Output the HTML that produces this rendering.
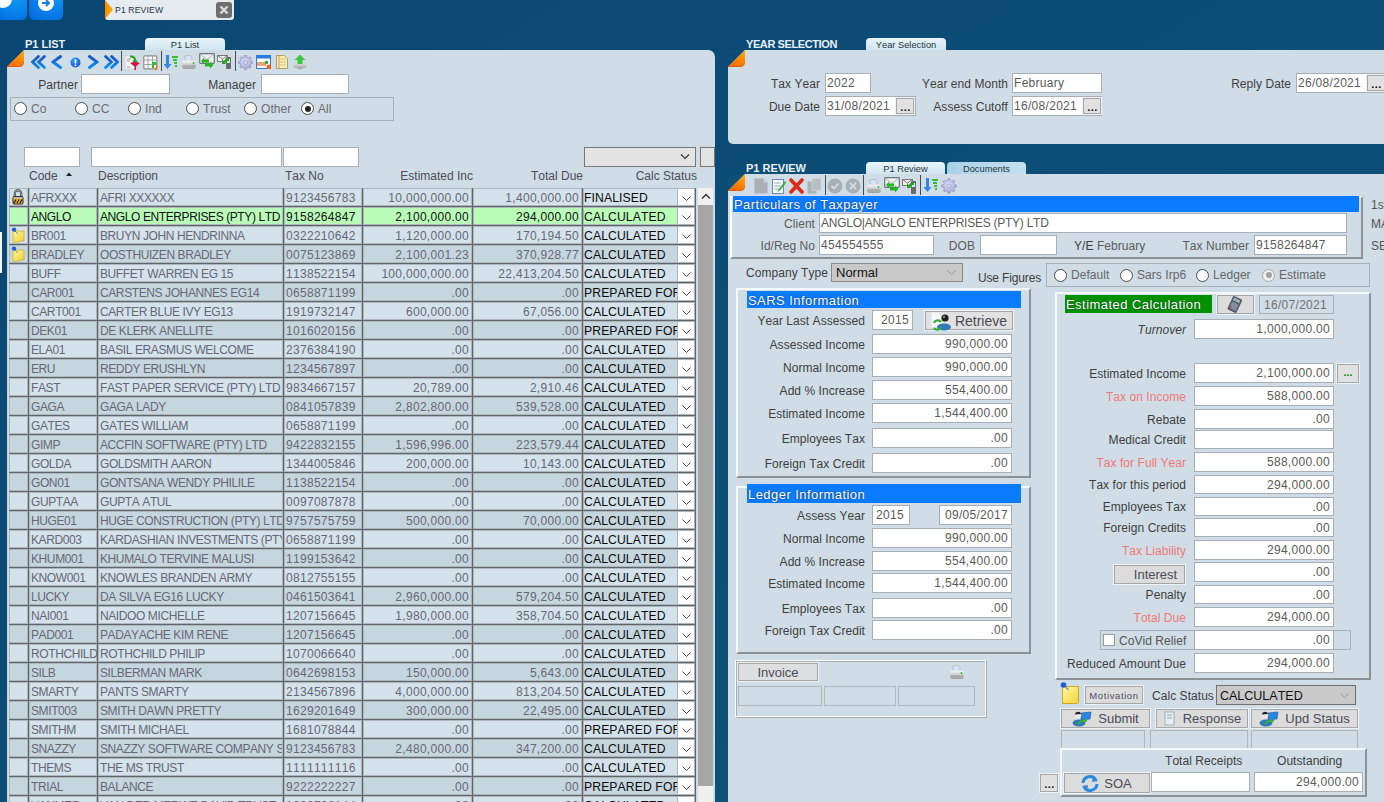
<!DOCTYPE html><html><head><meta charset="utf-8"><style>
html,body{margin:0;padding:0;}
body{width:1384px;height:802px;overflow:hidden;position:relative;background:#0b4874;font-family:"Liberation Sans",sans-serif;font-size:12px;color:#3c3c3c;font-kerning:none;}
.a{position:absolute;box-sizing:border-box;}
.t{white-space:nowrap;}
.lbl{white-space:nowrap;color:#3e3e3e;font-size:12px;letter-spacing:0.05px;}
.inp{background:#fff;border:1px solid #a8aeb3;color:#5a5a5a;white-space:nowrap;overflow:hidden;padding:0 3px 0 1px;font-size:12px;letter-spacing:0.3px;}
.panel{background:#d0dde6;}
.tab{font-size:9.3px;color:#2a3540;text-align:center;border-radius:4px 4px 0 0;}
.ttl{font-size:11px;font-weight:bold;color:#e9eff5;white-space:nowrap;line-height:12px;}
.cell{white-space:nowrap;overflow:hidden;color:#5e5e6e;font-size:12px;line-height:20px;height:18px;letter-spacing:-0.4px;}
.num{letter-spacing:0.3px;}
.btn{background:#e1e1e1;border:1px solid #a6a6a6;color:#4a4a58;text-align:center;white-space:nowrap;box-shadow:0 0 0 1px #eef3f7;}
.grp{border:1px solid #9aa3aa;box-shadow:1px 1px 0 #fff inset;}
.bar{background:#0a7cff;color:#fff;font-size:13px;letter-spacing:0.45px;white-space:nowrap;line-height:18px;padding-left:1px;text-shadow:0 0 1.5px #223;}
</style></head><body>
<div class="a" style="left:0;top:0;width:1384px;height:802px;background:linear-gradient(150deg,#0a4672 0%,#0b4a75 25%,#0d5077 60%,#0f5478 100%)"></div>
<div class="a" style="left:-10px;top:-8px;width:37px;height:28px;border-radius:5px;background:radial-gradient(circle at 70% 0%,#0aa0e8 0%,#0a86ee 45%,#0064da 100%)"></div>
<div class="a" style="left:-6px;top:-10px;width:18px;height:18px;border-radius:50%;background:#fff"></div>
<div class="a" style="left:29px;top:-8px;width:34px;height:28px;border-radius:5px;background:radial-gradient(circle at 70% 0%,#0aa0e8 0%,#0a86ee 45%,#0064da 100%)"></div>
<div class="a" style="left:38px;top:-5px;width:16px;height:16px;border-radius:50%;background:#fff"></div>
<svg class="a" style="left:40px;top:-2px" width="12" height="10" viewBox="0 0 12 10"><path d="M2 5 H9 M6 2 L9 5 L6 8" stroke="#1a7ee0" stroke-width="2" fill="none"/></svg>
<div class="a" style="left:105px;top:-4px;width:129px;height:24px;border-radius:3px;background:#e6ebf0"></div>
<svg class="a" style="left:105px;top:0px" width="9" height="19" viewBox="0 0 9 19"><defs><linearGradient id="tg" x1="0" y1="0" x2="1" y2="0"><stop offset="0" stop-color="#ff8800"/><stop offset="1" stop-color="#ffb000"/></linearGradient></defs><path d="M0 0 L8 9.5 L0 19 Z" fill="url(#tg)"/></svg>
<div class="a t " style="left:115px;top:4px;font-size:8.6px;color:#25354a;line-height:12px;letter-spacing:0.15px">P1 REVIEW</div>
<div class="a" style="left:216px;top:2px;width:16px;height:16px;border-radius:3px;background:#6e6e6e"></div>
<svg class="a" style="left:216px;top:2px" width="16" height="16" viewBox="0 0 16 16"><path d="M4.5 4.5 L11.5 11.5 M11.5 4.5 L4.5 11.5" stroke="#dcdcdc" stroke-width="2.4"/></svg>
<div class="a ttl" style="left:25px;top:38px">P1 LIST</div>
<div class="a tab" style="left:145px;top:38px;width:80px;height:12px;line-height:15px;background:linear-gradient(#eaf5fb,#cfe5f1)">P1 List</div>
<div class="a panel" style="left:7px;top:50px;width:708px;height:760px;border-radius:0 7px 0 0;box-shadow:inset 1px 0 0 #c4d2dc"></div>
<div class="a" style="left:0;top:232px;width:2px;height:41px;background:#f4f6f8"></div>
<div class="a" style="left:7px;top:50px;width:17px;height:17px"><svg width="17" height="17" viewBox="0 0 17 17"><defs><linearGradient id="og" x1="0.3" y1="1" x2="0.9" y2="0"><stop offset="0" stop-color="#ff6600"/><stop offset="0.6" stop-color="#ff8c00"/><stop offset="1" stop-color="#ffaa00"/></linearGradient></defs><path d="M0 0 H17 L0 17z" fill="#0a4873"/><path d="M0 17 L17 0 V12 Q17 17 12 17 Z" fill="url(#og)"/><path d="M0.5 16.5 H12 Q16.5 16.5 16.5 12" stroke="#d85000" stroke-width="0.8" fill="none" opacity="0.6"/></svg></div>
<svg class="a" style="left:31px;top:55px" width="16" height="14" viewBox="0 0 16 14"><defs><linearGradient id="bgr" x1="0" y1="0" x2="0" y2="1"><stop offset="0" stop-color="#1a56c4"/><stop offset="1" stop-color="#0a8cf2"/></linearGradient></defs><path d="M7.4 1.5 L1.6 7 L7.4 12.5 M13.4 1.5 L7.6 7 L13.4 12.5" stroke="url(#bgr)" stroke-width="2.8" fill="none" stroke-linecap="round"/></svg>
<svg class="a" style="left:51px;top:55px" width="12" height="14" viewBox="0 0 12 14"><path d="M9.5 1.5 L2 7 L9.5 12.5" stroke="url(#bgr)" stroke-width="2.9" fill="none" stroke-linecap="round"/></svg>
<svg class="a" style="left:70px;top:57px" width="11" height="11" viewBox="0 0 11 11"><defs><radialGradient id="igr" cx="0.4" cy="0.3" r="0.7"><stop offset="0" stop-color="#3aa0ff"/><stop offset="1" stop-color="#0a5ccc"/></radialGradient></defs><circle cx="5.5" cy="5.5" r="5" fill="url(#igr)"/><rect x="4.6" y="2.2" width="1.8" height="4.2" rx="0.6" fill="#fff"/><rect x="4.6" y="7.4" width="1.8" height="1.8" rx="0.6" fill="#fff"/></svg>
<svg class="a" style="left:87px;top:55px" width="12" height="14" viewBox="0 0 12 14"><path d="M2.5 1.5 L10 7 L2.5 12.5" stroke="url(#bgr)" stroke-width="2.9" fill="none" stroke-linecap="round"/></svg>
<svg class="a" style="left:103px;top:55px" width="16" height="14" viewBox="0 0 16 14"><path d="M2.6 1.5 L8.4 7 L2.6 12.5 M8.6 1.5 L14.4 7 L8.6 12.5" stroke="url(#bgr)" stroke-width="2.8" fill="none" stroke-linecap="round"/></svg>
<div class="a" style="left:121px;top:51px;width:1px;height:20px;background:#464c52"></div>
<svg class="a" style="left:124px;top:54px" width="16" height="16" viewBox="0 0 16 16"><rect x="1" y="2" width="10" height="13" fill="#f7f7f7" stroke="#cfcfcf" stroke-width="0.8"/><path d="M3 5 h4 M3 7 h3 M3 13 h3" stroke="#9a9a9a" stroke-width="1"/><path d="M6 1.5 Q12 1 12 6.5 L14 6.5 L11 10.5 L8 6.5 L10 6.5 Q10 3.5 6 3.5z" fill="#22a622"/><path d="M6 9 Q11 7 16 9 L12 12.5 V16 H10.5 V12.5z" fill="#d41448"/></svg>
<svg class="a" style="left:143px;top:55px" width="16" height="15" viewBox="0 0 16 15"><rect x="0.8" y="0.8" width="13" height="13" rx="1" fill="#fbfbff" stroke="#8c8c8c" stroke-width="1.2"/><path d="M1 5 h13 M1 9.5 h13 M5 1 v13 M9.5 1 v13" stroke="#9c9c9c" stroke-width="0.9"/><path d="M9 7 h3.5 q1 0 1 1.5 q0 1.5 -1 1.5 h-1.5 v3 h-2z" fill="#32b832"/><path d="M11 14.5 q2 -1 3 -5 q1.5 3 -0.5 5.5z" fill="#f26a1e"/></svg>
<div class="a" style="left:161px;top:51px;width:1px;height:20px;background:#464c52"></div>
<svg class="a" style="left:164px;top:55px" width="15" height="14" viewBox="0 0 15 14"><path d="M2 0 h3 v9 h2.5 l-4 5 -4 -5 h2.5z" fill="#2f86e6"/><path d="M8 1 h6 v2 h-6z M9 4 h4 v2 h-4z M10 7 h3 v2 h-3z M11 10 h2 v2 h-2z" fill="#35c030"/></svg>
<svg class="a" style="left:181px;top:55px" width="16" height="14" viewBox="0 0 16 14"><defs><linearGradient id="pg" x1="0" y1="0" x2="0" y2="1"><stop offset="0" stop-color="#fafafa"/><stop offset="1" stop-color="#9a9a9a"/></linearGradient></defs><path d="M3.5 1 L9.5 0.3 L11.5 5.5 L5 6.2z" fill="#d6e6f8" stroke="#9aaabb" stroke-width="0.6"/><path d="M1 8 Q1 5.5 4 5.5 H12 Q15 5.5 15 8.5 V11 Q15 14 12 14 H4 Q1 14 1 11z" fill="url(#pg)"/><path d="M2 11 H14" stroke="#8a8a8a" stroke-width="0.6"/><circle cx="12.5" cy="8" r="0.9" fill="#30b030"/></svg>
<svg class="a" style="left:199px;top:53px" width="16" height="16" viewBox="0 0 16 16"><rect x="0.7" y="0.7" width="14.6" height="9.6" rx="0.8" fill="#f0f0f0" stroke="#6a747c" stroke-width="1.2"/><path d="M1 1 L8 6.5 L15 1" stroke="#9aa" fill="none" stroke-width="0.8"/><path d="M4 6.5 h6 v3 h-6z" fill="#25b525"/><path d="M5 4.5 L2 8 L5 11.5z" fill="#25b525"/><path d="M6 10.5 h6 v3 h-6z" fill="#25b525"/><path d="M11 8.5 L14.5 12 L11 15.5z" fill="#25b525"/></svg>
<svg class="a" style="left:217px;top:54px" width="15" height="15" viewBox="0 0 15 15"><rect x="0.5" y="1.5" width="10" height="6" fill="#f4f4f4" stroke="#777"/><path d="M0.5 1.5 L5.5 5 L10.5 1.5" stroke="#777" fill="none"/><rect x="9" y="3" width="5" height="12" rx="1" fill="#6a6a6a"/><rect x="10" y="5" width="3" height="4" fill="#cfe"/><path d="M12 4 q-4 0 -5 3 l-2-2 v5 h5 l-2-1 q1-2 4-2z" fill="#2aa02a"/></svg>
<div class="a" style="left:235px;top:51px;width:1px;height:20px;background:#464c52"></div>
<svg class="a" style="left:238px;top:55px" width="15" height="15" viewBox="0 0 15 15"><defs><radialGradient id="ggr" cx="0.45" cy="0.4" r="0.6"><stop offset="0" stop-color="#e0e0f6"/><stop offset="1" stop-color="#a4a4d8"/></radialGradient></defs><path d="M12.53 6.17 L14.62 6.42 L14.62 8.58 L12.53 8.83 L12.30 9.49 L12.00 10.11 L13.30 11.77 L11.77 13.30 L10.11 12.00 L9.49 12.30 L8.83 12.53 L8.58 14.62 L6.42 14.62 L6.17 12.53 L5.51 12.30 L4.89 12.00 L3.23 13.30 L1.70 11.77 L3.00 10.11 L2.70 9.49 L2.47 8.83 L0.38 8.58 L0.38 6.42 L2.47 6.17 L2.70 5.51 L3.00 4.89 L1.70 3.23 L3.23 1.70 L4.89 3.00 L5.51 2.70 L6.17 2.47 L6.42 0.38 L8.58 0.38 L8.83 2.47 L9.49 2.70 L10.11 3.00 L11.77 1.70 L13.30 3.23 L12.00 4.89 L12.30 5.51Z" fill="url(#ggr)" stroke="#8a8ac0" stroke-width="0.6"/><circle cx="7.5" cy="7.5" r="2" fill="#d0dde6" stroke="#9090c0" stroke-width="0.6"/></svg>
<svg class="a" style="left:256px;top:55px" width="15" height="14" viewBox="0 0 15 14"><rect x="0.5" y="0.5" width="14" height="13" fill="#fff" stroke="#2a7ae0"/><rect x="0.5" y="0.5" width="14" height="3" fill="#2a7ae0"/><path d="M1 8 h9 M1 10 h9" stroke="#f08040" stroke-width="1.5"/><path d="M9 6 h3 v3 h-3z" fill="#30b040"/><circle cx="13" cy="12" r="2.5" fill="#f06020"/></svg>
<svg class="a" style="left:276px;top:55px" width="12" height="14" viewBox="0 0 12 14"><path d="M0.5 0.5 h8 l3 3 v10 h-11z" fill="#f8eeb0" stroke="#b0a070"/><path d="M3 0.5 v13" stroke="#e07060" stroke-width="0.8"/><path d="M4 4 h6 M4 7 h6 M4 10 h6" stroke="#c8b880" stroke-width="0.8"/></svg>
<svg class="a" style="left:293px;top:54px" width="14" height="16" viewBox="0 0 14 16"><defs><linearGradient id="ugr" x1="0" y1="0" x2="0" y2="1"><stop offset="0" stop-color="#f4f4f4"/><stop offset="1" stop-color="#9a9a9a"/></linearGradient></defs><path d="M0.5 10 L7 7.5 L13.5 10 V13 L7 15.5 L0.5 13z" fill="url(#ugr)"/><path d="M7 0.5 L12.5 6 H9.5 V10 H4.5 V6 H1.5z" fill="#3cc83c"/></svg>
<div class="a lbl" style="right:1306px;top:75px;height:20px;line-height:20px;">Partner</div>
<div class="a inp" style="left:81px;top:74px;width:89px;height:20px;text-align:left;line-height:18px;"></div>
<div class="a lbl" style="right:1128px;top:75px;height:20px;line-height:20px;">Manager</div>
<div class="a inp" style="left:261px;top:74px;width:88px;height:20px;text-align:left;line-height:18px;"></div>
<div class="a" style="left:10px;top:97px;width:384px;height:24px;border:1px solid #a8b0b6;"></div>
<div class="a" style="left:14px;top:102.0px;width:13px;height:13px;border-radius:50%;background:#fff;border:1px solid #4a4a4a;"></div>
<div class="a lbl" style="left:31px;top:100.5px;line-height:16px;color:#6a6a72">Co</div>
<div class="a" style="left:75px;top:102.0px;width:13px;height:13px;border-radius:50%;background:#fff;border:1px solid #4a4a4a;"></div>
<div class="a lbl" style="left:92px;top:100.5px;line-height:16px;color:#6a6a72">CC</div>
<div class="a" style="left:128px;top:102.0px;width:13px;height:13px;border-radius:50%;background:#fff;border:1px solid #4a4a4a;"></div>
<div class="a lbl" style="left:145px;top:100.5px;line-height:16px;color:#6a6a72">Ind</div>
<div class="a" style="left:186px;top:102.0px;width:13px;height:13px;border-radius:50%;background:#fff;border:1px solid #4a4a4a;"></div>
<div class="a lbl" style="left:203px;top:100.5px;line-height:16px;color:#6a6a72">Trust</div>
<div class="a" style="left:244px;top:102.0px;width:13px;height:13px;border-radius:50%;background:#fff;border:1px solid #4a4a4a;"></div>
<div class="a lbl" style="left:261px;top:100.5px;line-height:16px;color:#6a6a72">Other</div>
<div class="a" style="left:301px;top:102.0px;width:13px;height:13px;border-radius:50%;background:#fff;border:1px solid #4a4a4a;"></div>
<div class="a" style="left:304.5px;top:105.5px;width:6px;height:6px;border-radius:50%;background:#222;"></div>
<div class="a lbl" style="left:318px;top:100.5px;line-height:16px;color:#6a6a72">All</div>
<div class="a inp" style="left:24px;top:147px;width:56px;height:20px;text-align:left;line-height:18px;"></div>
<div class="a inp" style="left:91px;top:147px;width:191px;height:20px;text-align:left;line-height:18px;"></div>
<div class="a inp" style="left:283px;top:147px;width:76px;height:20px;text-align:left;line-height:18px;"></div>
<div class="a" style="left:584px;top:147px;width:112px;height:20px;background:#e3e3e3;border:1px solid #767676"></div>
<svg class="a" style="left:680px;top:153px" width="10" height="8" viewBox="0 0 10 8"><path d="M1 1.5 L5 5.5 L9 1.5" stroke="#333" stroke-width="1.2" fill="none"/></svg>
<div class="a" style="left:700px;top:147px;width:15px;height:20px;background:#e3e3e3;border:1px solid #767676"></div>
<div class="a t " style="left:29px;top:168px;color:#4c4c58;font-size:12px;line-height:16px">Code</div>
<svg class="a" style="left:66px;top:172px" width="6" height="5" viewBox="0 0 6 5"><path d="M0 4 L3 0.5 L6 4z" fill="#222"/></svg>
<div class="a t " style="left:98px;top:168px;color:#4c4c58;font-size:12px;line-height:16px">Description</div>
<div class="a t " style="left:285px;top:168px;color:#4c4c58;font-size:12px;line-height:16px">Tax No</div>
<div class="a t " style="right:911px;top:168px;color:#4c4c58;font-size:12px;line-height:16px">Estimated Inc</div>
<div class="a t " style="right:801px;top:168px;color:#4c4c58;font-size:12px;line-height:16px">Total Due</div>
<div class="a t " style="right:687px;top:168px;color:#4c4c58;font-size:12px;line-height:16px">Calc Status</div>
<div class="a" style="left:9px;top:188px;width:687px;height:620px;background:#5d666b"></div>
<div class="a" style="left:9px;top:188px;width:19px;height:18px;background:#d4e2ec;box-shadow:inset 0 0 0 1px #b0b6bd"></div>
<div class="a" style="left:29px;top:188px;width:68px;height:18px;background:#d4e2ec;box-shadow:inset 0 0 0 1px #b0b6bd"></div>
<div class="a" style="left:98px;top:188px;width:185px;height:18px;background:#d4e2ec;box-shadow:inset 0 0 0 1px #b0b6bd"></div>
<div class="a" style="left:284px;top:188px;width:78px;height:18px;background:#d4e2ec;box-shadow:inset 0 0 0 1px #b0b6bd"></div>
<div class="a" style="left:363px;top:188px;width:109px;height:18px;background:#d4e2ec;box-shadow:inset 0 0 0 1px #b0b6bd"></div>
<div class="a" style="left:473px;top:188px;width:109px;height:18px;background:#d4e2ec;box-shadow:inset 0 0 0 1px #b0b6bd"></div>
<div class="a" style="left:583px;top:188px;width:112px;height:18px;background:#d4e2ec;box-shadow:inset 0 0 0 1px #b0b6bd"></div>
<div class="a" style="left:11px;top:189px"><svg width="14" height="16" viewBox="0 0 14 16"><path d="M3.8 8 V4.6 A3.2 3.2 0 0 1 10.2 4.6 V8" stroke="#3a3a3a" stroke-width="2.2" fill="none"/><path d="M3.8 8 V4.6 A3.2 3.2 0 0 1 10.2 4.6 V8" stroke="#c8c8c8" stroke-width="0.8" fill="none"/><rect x="2" y="7.5" width="10" height="7.5" rx="1" fill="#f2b000" stroke="#2a2a2a" stroke-width="1"/><rect x="2.5" y="8" width="9" height="1.6" fill="#b8c4cc"/><path d="M3 14 L5 10.5 M6 14 L8 10.5 M9 14 L11 10.5" stroke="#1a1a1a" stroke-width="1.2"/></svg></div>
<div class="a cell" style="left:31px;top:188px;width:66px;color:#676775">AFRXXX</div>
<div class="a cell" style="left:100px;top:188px;width:182px;color:#676775">AFRI XXXXXX</div>
<div class="a cell num" style="left:286px;top:188px;width:76px;color:#676775">9123456783</div>
<div class="a cell num" style="left:363px;top:188px;width:106px;text-align:right;color:#676775">10,000,000.00</div>
<div class="a cell num" style="left:473px;top:188px;width:106px;text-align:right;color:#676775">1,400,000.00</div>
<div class="a cell" style="left:584px;top:188px;width:93px;color:#0a0a0a;font-size:12.2px;letter-spacing:0.1px">FINALISED</div>
<div class="a" style="left:677px;top:188px;width:18px;height:18px;background:#fff;box-shadow:inset 0 0 0 1px #b0b6bd"></div>
<svg class="a" style="left:682px;top:196px" width="9" height="6" viewBox="0 0 9 6"><path d="M0.5 0.5 L4.5 4.5 L8.5 0.5" stroke="#333" stroke-width="0.9" fill="none"/></svg>
<div class="a" style="left:9px;top:207px;width:19px;height:18px;background:#b9fdb9;box-shadow:inset 0 0 0 1px #b0b6bd"></div>
<div class="a" style="left:29px;top:207px;width:68px;height:18px;background:#b9fdb9;box-shadow:inset 0 0 0 1px #b0b6bd"></div>
<div class="a" style="left:98px;top:207px;width:185px;height:18px;background:#b9fdb9;box-shadow:inset 0 0 0 1px #b0b6bd"></div>
<div class="a" style="left:284px;top:207px;width:78px;height:18px;background:#b9fdb9;box-shadow:inset 0 0 0 1px #b0b6bd"></div>
<div class="a" style="left:363px;top:207px;width:109px;height:18px;background:#b9fdb9;box-shadow:inset 0 0 0 1px #b0b6bd"></div>
<div class="a" style="left:473px;top:207px;width:109px;height:18px;background:#b9fdb9;box-shadow:inset 0 0 0 1px #b0b6bd"></div>
<div class="a" style="left:583px;top:207px;width:112px;height:18px;background:#b9fdb9;box-shadow:inset 0 0 0 1px #b0b6bd"></div>
<div class="a cell" style="left:31px;top:207px;width:66px;color:#101010">ANGLO</div>
<div class="a cell" style="left:100px;top:207px;width:182px;color:#101010">ANGLO ENTERPRISES (PTY) LTD</div>
<div class="a cell num" style="left:286px;top:207px;width:76px;color:#101010">9158264847</div>
<div class="a cell num" style="left:363px;top:207px;width:106px;text-align:right;color:#101010">2,100,000.00</div>
<div class="a cell num" style="left:473px;top:207px;width:106px;text-align:right;color:#101010">294,000.00</div>
<div class="a cell" style="left:584px;top:207px;width:93px;color:#0a0a0a;font-size:12.2px;letter-spacing:0.1px">CALCULATED</div>
<div class="a" style="left:677px;top:207px;width:18px;height:18px;background:#fff;box-shadow:inset 0 0 0 1px #b0b6bd"></div>
<svg class="a" style="left:682px;top:215px" width="9" height="6" viewBox="0 0 9 6"><path d="M0.5 0.5 L4.5 4.5 L8.5 0.5" stroke="#333" stroke-width="0.9" fill="none"/></svg>
<div class="a" style="left:9px;top:226px;width:19px;height:18px;background:#d4e2ec;box-shadow:inset 0 0 0 1px #b0b6bd"></div>
<div class="a" style="left:29px;top:226px;width:68px;height:18px;background:#d4e2ec;box-shadow:inset 0 0 0 1px #b0b6bd"></div>
<div class="a" style="left:98px;top:226px;width:185px;height:18px;background:#d4e2ec;box-shadow:inset 0 0 0 1px #b0b6bd"></div>
<div class="a" style="left:284px;top:226px;width:78px;height:18px;background:#d4e2ec;box-shadow:inset 0 0 0 1px #b0b6bd"></div>
<div class="a" style="left:363px;top:226px;width:109px;height:18px;background:#d4e2ec;box-shadow:inset 0 0 0 1px #b0b6bd"></div>
<div class="a" style="left:473px;top:226px;width:109px;height:18px;background:#d4e2ec;box-shadow:inset 0 0 0 1px #b0b6bd"></div>
<div class="a" style="left:583px;top:226px;width:112px;height:18px;background:#d4e2ec;box-shadow:inset 0 0 0 1px #b0b6bd"></div>
<div class="a" style="left:11px;top:227px"><svg width="15" height="17" viewBox="0 0 15 17"><defs><linearGradient id="ng" x1="0" y1="0" x2="1" y2="1"><stop offset="0" stop-color="#fff6a0"/><stop offset="1" stop-color="#f0d030"/></linearGradient></defs><path d="M2 4 h11 v10 q-3 -1 -6 1 q-3 1 -5 0z" fill="url(#ng)" stroke="#c8a820" stroke-width="0.7"/><path d="M3 3 L7 7" stroke="#7a8aa0" stroke-width="1"/><circle cx="3" cy="2.6" r="2.2" fill="#1f5fd8"/></svg></div>
<div class="a cell" style="left:31px;top:226px;width:66px;color:#676775">BR001</div>
<div class="a cell" style="left:100px;top:226px;width:182px;color:#676775">BRUYN JOHN HENDRINNA</div>
<div class="a cell num" style="left:286px;top:226px;width:76px;color:#676775">0322210642</div>
<div class="a cell num" style="left:363px;top:226px;width:106px;text-align:right;color:#676775">1,120,000.00</div>
<div class="a cell num" style="left:473px;top:226px;width:106px;text-align:right;color:#676775">170,194.50</div>
<div class="a cell" style="left:584px;top:226px;width:93px;color:#0a0a0a;font-size:12.2px;letter-spacing:0.1px">CALCULATED</div>
<div class="a" style="left:677px;top:226px;width:18px;height:18px;background:#fff;box-shadow:inset 0 0 0 1px #b0b6bd"></div>
<svg class="a" style="left:682px;top:234px" width="9" height="6" viewBox="0 0 9 6"><path d="M0.5 0.5 L4.5 4.5 L8.5 0.5" stroke="#333" stroke-width="0.9" fill="none"/></svg>
<div class="a" style="left:9px;top:245px;width:19px;height:18px;background:#c6d6df;box-shadow:inset 0 0 0 1px #b0b6bd"></div>
<div class="a" style="left:29px;top:245px;width:68px;height:18px;background:#c6d6df;box-shadow:inset 0 0 0 1px #b0b6bd"></div>
<div class="a" style="left:98px;top:245px;width:185px;height:18px;background:#c6d6df;box-shadow:inset 0 0 0 1px #b0b6bd"></div>
<div class="a" style="left:284px;top:245px;width:78px;height:18px;background:#c6d6df;box-shadow:inset 0 0 0 1px #b0b6bd"></div>
<div class="a" style="left:363px;top:245px;width:109px;height:18px;background:#c6d6df;box-shadow:inset 0 0 0 1px #b0b6bd"></div>
<div class="a" style="left:473px;top:245px;width:109px;height:18px;background:#c6d6df;box-shadow:inset 0 0 0 1px #b0b6bd"></div>
<div class="a" style="left:583px;top:245px;width:112px;height:18px;background:#c6d6df;box-shadow:inset 0 0 0 1px #b0b6bd"></div>
<div class="a" style="left:11px;top:246px"><svg width="15" height="17" viewBox="0 0 15 17"><defs><linearGradient id="ng" x1="0" y1="0" x2="1" y2="1"><stop offset="0" stop-color="#fff6a0"/><stop offset="1" stop-color="#f0d030"/></linearGradient></defs><path d="M2 4 h11 v10 q-3 -1 -6 1 q-3 1 -5 0z" fill="url(#ng)" stroke="#c8a820" stroke-width="0.7"/><path d="M3 3 L7 7" stroke="#7a8aa0" stroke-width="1"/><circle cx="3" cy="2.6" r="2.2" fill="#1f5fd8"/></svg></div>
<div class="a cell" style="left:31px;top:245px;width:66px;color:#676775">BRADLEY</div>
<div class="a cell" style="left:100px;top:245px;width:182px;color:#676775">OOSTHUIZEN BRADLEY</div>
<div class="a cell num" style="left:286px;top:245px;width:76px;color:#676775">0075123869</div>
<div class="a cell num" style="left:363px;top:245px;width:106px;text-align:right;color:#676775">2,100,001.23</div>
<div class="a cell num" style="left:473px;top:245px;width:106px;text-align:right;color:#676775">370,928.77</div>
<div class="a cell" style="left:584px;top:245px;width:93px;color:#0a0a0a;font-size:12.2px;letter-spacing:0.1px">CALCULATED</div>
<div class="a" style="left:677px;top:245px;width:18px;height:18px;background:#fff;box-shadow:inset 0 0 0 1px #b0b6bd"></div>
<svg class="a" style="left:682px;top:253px" width="9" height="6" viewBox="0 0 9 6"><path d="M0.5 0.5 L4.5 4.5 L8.5 0.5" stroke="#333" stroke-width="0.9" fill="none"/></svg>
<div class="a" style="left:9px;top:264px;width:19px;height:18px;background:#d4e2ec;box-shadow:inset 0 0 0 1px #b0b6bd"></div>
<div class="a" style="left:29px;top:264px;width:68px;height:18px;background:#d4e2ec;box-shadow:inset 0 0 0 1px #b0b6bd"></div>
<div class="a" style="left:98px;top:264px;width:185px;height:18px;background:#d4e2ec;box-shadow:inset 0 0 0 1px #b0b6bd"></div>
<div class="a" style="left:284px;top:264px;width:78px;height:18px;background:#d4e2ec;box-shadow:inset 0 0 0 1px #b0b6bd"></div>
<div class="a" style="left:363px;top:264px;width:109px;height:18px;background:#d4e2ec;box-shadow:inset 0 0 0 1px #b0b6bd"></div>
<div class="a" style="left:473px;top:264px;width:109px;height:18px;background:#d4e2ec;box-shadow:inset 0 0 0 1px #b0b6bd"></div>
<div class="a" style="left:583px;top:264px;width:112px;height:18px;background:#d4e2ec;box-shadow:inset 0 0 0 1px #b0b6bd"></div>
<div class="a cell" style="left:31px;top:264px;width:66px;color:#676775">BUFF</div>
<div class="a cell" style="left:100px;top:264px;width:182px;color:#676775">BUFFET WARREN EG 15</div>
<div class="a cell num" style="left:286px;top:264px;width:76px;color:#676775">1138522154</div>
<div class="a cell num" style="left:363px;top:264px;width:106px;text-align:right;color:#676775">100,000,000.00</div>
<div class="a cell num" style="left:473px;top:264px;width:106px;text-align:right;color:#676775">22,413,204.50</div>
<div class="a cell" style="left:584px;top:264px;width:93px;color:#0a0a0a;font-size:12.2px;letter-spacing:0.1px">CALCULATED</div>
<div class="a" style="left:677px;top:264px;width:18px;height:18px;background:#fff;box-shadow:inset 0 0 0 1px #b0b6bd"></div>
<svg class="a" style="left:682px;top:272px" width="9" height="6" viewBox="0 0 9 6"><path d="M0.5 0.5 L4.5 4.5 L8.5 0.5" stroke="#333" stroke-width="0.9" fill="none"/></svg>
<div class="a" style="left:9px;top:283px;width:19px;height:18px;background:#c6d6df;box-shadow:inset 0 0 0 1px #b0b6bd"></div>
<div class="a" style="left:29px;top:283px;width:68px;height:18px;background:#c6d6df;box-shadow:inset 0 0 0 1px #b0b6bd"></div>
<div class="a" style="left:98px;top:283px;width:185px;height:18px;background:#c6d6df;box-shadow:inset 0 0 0 1px #b0b6bd"></div>
<div class="a" style="left:284px;top:283px;width:78px;height:18px;background:#c6d6df;box-shadow:inset 0 0 0 1px #b0b6bd"></div>
<div class="a" style="left:363px;top:283px;width:109px;height:18px;background:#c6d6df;box-shadow:inset 0 0 0 1px #b0b6bd"></div>
<div class="a" style="left:473px;top:283px;width:109px;height:18px;background:#c6d6df;box-shadow:inset 0 0 0 1px #b0b6bd"></div>
<div class="a" style="left:583px;top:283px;width:112px;height:18px;background:#c6d6df;box-shadow:inset 0 0 0 1px #b0b6bd"></div>
<div class="a cell" style="left:31px;top:283px;width:66px;color:#676775">CAR001</div>
<div class="a cell" style="left:100px;top:283px;width:182px;color:#676775">CARSTENS JOHANNES EG14</div>
<div class="a cell num" style="left:286px;top:283px;width:76px;color:#676775">0658871199</div>
<div class="a cell num" style="left:363px;top:283px;width:106px;text-align:right;color:#676775">.00</div>
<div class="a cell num" style="left:473px;top:283px;width:106px;text-align:right;color:#676775">.00</div>
<div class="a cell" style="left:584px;top:283px;width:93px;color:#0a0a0a;font-size:12.2px;letter-spacing:0.1px">PREPARED FOR</div>
<div class="a" style="left:677px;top:283px;width:18px;height:18px;background:#fff;box-shadow:inset 0 0 0 1px #b0b6bd"></div>
<svg class="a" style="left:682px;top:291px" width="9" height="6" viewBox="0 0 9 6"><path d="M0.5 0.5 L4.5 4.5 L8.5 0.5" stroke="#333" stroke-width="0.9" fill="none"/></svg>
<div class="a" style="left:9px;top:302px;width:19px;height:18px;background:#d4e2ec;box-shadow:inset 0 0 0 1px #b0b6bd"></div>
<div class="a" style="left:29px;top:302px;width:68px;height:18px;background:#d4e2ec;box-shadow:inset 0 0 0 1px #b0b6bd"></div>
<div class="a" style="left:98px;top:302px;width:185px;height:18px;background:#d4e2ec;box-shadow:inset 0 0 0 1px #b0b6bd"></div>
<div class="a" style="left:284px;top:302px;width:78px;height:18px;background:#d4e2ec;box-shadow:inset 0 0 0 1px #b0b6bd"></div>
<div class="a" style="left:363px;top:302px;width:109px;height:18px;background:#d4e2ec;box-shadow:inset 0 0 0 1px #b0b6bd"></div>
<div class="a" style="left:473px;top:302px;width:109px;height:18px;background:#d4e2ec;box-shadow:inset 0 0 0 1px #b0b6bd"></div>
<div class="a" style="left:583px;top:302px;width:112px;height:18px;background:#d4e2ec;box-shadow:inset 0 0 0 1px #b0b6bd"></div>
<div class="a cell" style="left:31px;top:302px;width:66px;color:#676775">CART001</div>
<div class="a cell" style="left:100px;top:302px;width:182px;color:#676775">CARTER BLUE IVY EG13</div>
<div class="a cell num" style="left:286px;top:302px;width:76px;color:#676775">1919732147</div>
<div class="a cell num" style="left:363px;top:302px;width:106px;text-align:right;color:#676775">600,000.00</div>
<div class="a cell num" style="left:473px;top:302px;width:106px;text-align:right;color:#676775">67,056.00</div>
<div class="a cell" style="left:584px;top:302px;width:93px;color:#0a0a0a;font-size:12.2px;letter-spacing:0.1px">CALCULATED</div>
<div class="a" style="left:677px;top:302px;width:18px;height:18px;background:#fff;box-shadow:inset 0 0 0 1px #b0b6bd"></div>
<svg class="a" style="left:682px;top:310px" width="9" height="6" viewBox="0 0 9 6"><path d="M0.5 0.5 L4.5 4.5 L8.5 0.5" stroke="#333" stroke-width="0.9" fill="none"/></svg>
<div class="a" style="left:9px;top:321px;width:19px;height:18px;background:#c6d6df;box-shadow:inset 0 0 0 1px #b0b6bd"></div>
<div class="a" style="left:29px;top:321px;width:68px;height:18px;background:#c6d6df;box-shadow:inset 0 0 0 1px #b0b6bd"></div>
<div class="a" style="left:98px;top:321px;width:185px;height:18px;background:#c6d6df;box-shadow:inset 0 0 0 1px #b0b6bd"></div>
<div class="a" style="left:284px;top:321px;width:78px;height:18px;background:#c6d6df;box-shadow:inset 0 0 0 1px #b0b6bd"></div>
<div class="a" style="left:363px;top:321px;width:109px;height:18px;background:#c6d6df;box-shadow:inset 0 0 0 1px #b0b6bd"></div>
<div class="a" style="left:473px;top:321px;width:109px;height:18px;background:#c6d6df;box-shadow:inset 0 0 0 1px #b0b6bd"></div>
<div class="a" style="left:583px;top:321px;width:112px;height:18px;background:#c6d6df;box-shadow:inset 0 0 0 1px #b0b6bd"></div>
<div class="a cell" style="left:31px;top:321px;width:66px;color:#676775">DEK01</div>
<div class="a cell" style="left:100px;top:321px;width:182px;color:#676775">DE KLERK ANELLITE</div>
<div class="a cell num" style="left:286px;top:321px;width:76px;color:#676775">1016020156</div>
<div class="a cell num" style="left:363px;top:321px;width:106px;text-align:right;color:#676775">.00</div>
<div class="a cell num" style="left:473px;top:321px;width:106px;text-align:right;color:#676775">.00</div>
<div class="a cell" style="left:584px;top:321px;width:93px;color:#0a0a0a;font-size:12.2px;letter-spacing:0.1px">PREPARED FOR</div>
<div class="a" style="left:677px;top:321px;width:18px;height:18px;background:#fff;box-shadow:inset 0 0 0 1px #b0b6bd"></div>
<svg class="a" style="left:682px;top:329px" width="9" height="6" viewBox="0 0 9 6"><path d="M0.5 0.5 L4.5 4.5 L8.5 0.5" stroke="#333" stroke-width="0.9" fill="none"/></svg>
<div class="a" style="left:9px;top:340px;width:19px;height:18px;background:#d4e2ec;box-shadow:inset 0 0 0 1px #b0b6bd"></div>
<div class="a" style="left:29px;top:340px;width:68px;height:18px;background:#d4e2ec;box-shadow:inset 0 0 0 1px #b0b6bd"></div>
<div class="a" style="left:98px;top:340px;width:185px;height:18px;background:#d4e2ec;box-shadow:inset 0 0 0 1px #b0b6bd"></div>
<div class="a" style="left:284px;top:340px;width:78px;height:18px;background:#d4e2ec;box-shadow:inset 0 0 0 1px #b0b6bd"></div>
<div class="a" style="left:363px;top:340px;width:109px;height:18px;background:#d4e2ec;box-shadow:inset 0 0 0 1px #b0b6bd"></div>
<div class="a" style="left:473px;top:340px;width:109px;height:18px;background:#d4e2ec;box-shadow:inset 0 0 0 1px #b0b6bd"></div>
<div class="a" style="left:583px;top:340px;width:112px;height:18px;background:#d4e2ec;box-shadow:inset 0 0 0 1px #b0b6bd"></div>
<div class="a cell" style="left:31px;top:340px;width:66px;color:#676775">ELA01</div>
<div class="a cell" style="left:100px;top:340px;width:182px;color:#676775">BASIL ERASMUS WELCOME</div>
<div class="a cell num" style="left:286px;top:340px;width:76px;color:#676775">2376384190</div>
<div class="a cell num" style="left:363px;top:340px;width:106px;text-align:right;color:#676775">.00</div>
<div class="a cell num" style="left:473px;top:340px;width:106px;text-align:right;color:#676775">.00</div>
<div class="a cell" style="left:584px;top:340px;width:93px;color:#0a0a0a;font-size:12.2px;letter-spacing:0.1px">CALCULATED</div>
<div class="a" style="left:677px;top:340px;width:18px;height:18px;background:#fff;box-shadow:inset 0 0 0 1px #b0b6bd"></div>
<svg class="a" style="left:682px;top:348px" width="9" height="6" viewBox="0 0 9 6"><path d="M0.5 0.5 L4.5 4.5 L8.5 0.5" stroke="#333" stroke-width="0.9" fill="none"/></svg>
<div class="a" style="left:9px;top:359px;width:19px;height:18px;background:#c6d6df;box-shadow:inset 0 0 0 1px #b0b6bd"></div>
<div class="a" style="left:29px;top:359px;width:68px;height:18px;background:#c6d6df;box-shadow:inset 0 0 0 1px #b0b6bd"></div>
<div class="a" style="left:98px;top:359px;width:185px;height:18px;background:#c6d6df;box-shadow:inset 0 0 0 1px #b0b6bd"></div>
<div class="a" style="left:284px;top:359px;width:78px;height:18px;background:#c6d6df;box-shadow:inset 0 0 0 1px #b0b6bd"></div>
<div class="a" style="left:363px;top:359px;width:109px;height:18px;background:#c6d6df;box-shadow:inset 0 0 0 1px #b0b6bd"></div>
<div class="a" style="left:473px;top:359px;width:109px;height:18px;background:#c6d6df;box-shadow:inset 0 0 0 1px #b0b6bd"></div>
<div class="a" style="left:583px;top:359px;width:112px;height:18px;background:#c6d6df;box-shadow:inset 0 0 0 1px #b0b6bd"></div>
<div class="a cell" style="left:31px;top:359px;width:66px;color:#676775">ERU</div>
<div class="a cell" style="left:100px;top:359px;width:182px;color:#676775">REDDY ERUSHLYN</div>
<div class="a cell num" style="left:286px;top:359px;width:76px;color:#676775">1234567897</div>
<div class="a cell num" style="left:363px;top:359px;width:106px;text-align:right;color:#676775">.00</div>
<div class="a cell num" style="left:473px;top:359px;width:106px;text-align:right;color:#676775">.00</div>
<div class="a cell" style="left:584px;top:359px;width:93px;color:#0a0a0a;font-size:12.2px;letter-spacing:0.1px">CALCULATED</div>
<div class="a" style="left:677px;top:359px;width:18px;height:18px;background:#fff;box-shadow:inset 0 0 0 1px #b0b6bd"></div>
<svg class="a" style="left:682px;top:367px" width="9" height="6" viewBox="0 0 9 6"><path d="M0.5 0.5 L4.5 4.5 L8.5 0.5" stroke="#333" stroke-width="0.9" fill="none"/></svg>
<div class="a" style="left:9px;top:378px;width:19px;height:18px;background:#d4e2ec;box-shadow:inset 0 0 0 1px #b0b6bd"></div>
<div class="a" style="left:29px;top:378px;width:68px;height:18px;background:#d4e2ec;box-shadow:inset 0 0 0 1px #b0b6bd"></div>
<div class="a" style="left:98px;top:378px;width:185px;height:18px;background:#d4e2ec;box-shadow:inset 0 0 0 1px #b0b6bd"></div>
<div class="a" style="left:284px;top:378px;width:78px;height:18px;background:#d4e2ec;box-shadow:inset 0 0 0 1px #b0b6bd"></div>
<div class="a" style="left:363px;top:378px;width:109px;height:18px;background:#d4e2ec;box-shadow:inset 0 0 0 1px #b0b6bd"></div>
<div class="a" style="left:473px;top:378px;width:109px;height:18px;background:#d4e2ec;box-shadow:inset 0 0 0 1px #b0b6bd"></div>
<div class="a" style="left:583px;top:378px;width:112px;height:18px;background:#d4e2ec;box-shadow:inset 0 0 0 1px #b0b6bd"></div>
<div class="a cell" style="left:31px;top:378px;width:66px;color:#676775">FAST</div>
<div class="a cell" style="left:100px;top:378px;width:182px;color:#676775">FAST PAPER SERVICE (PTY) LTD</div>
<div class="a cell num" style="left:286px;top:378px;width:76px;color:#676775">9834667157</div>
<div class="a cell num" style="left:363px;top:378px;width:106px;text-align:right;color:#676775">20,789.00</div>
<div class="a cell num" style="left:473px;top:378px;width:106px;text-align:right;color:#676775">2,910.46</div>
<div class="a cell" style="left:584px;top:378px;width:93px;color:#0a0a0a;font-size:12.2px;letter-spacing:0.1px">CALCULATED</div>
<div class="a" style="left:677px;top:378px;width:18px;height:18px;background:#fff;box-shadow:inset 0 0 0 1px #b0b6bd"></div>
<svg class="a" style="left:682px;top:386px" width="9" height="6" viewBox="0 0 9 6"><path d="M0.5 0.5 L4.5 4.5 L8.5 0.5" stroke="#333" stroke-width="0.9" fill="none"/></svg>
<div class="a" style="left:9px;top:397px;width:19px;height:18px;background:#c6d6df;box-shadow:inset 0 0 0 1px #b0b6bd"></div>
<div class="a" style="left:29px;top:397px;width:68px;height:18px;background:#c6d6df;box-shadow:inset 0 0 0 1px #b0b6bd"></div>
<div class="a" style="left:98px;top:397px;width:185px;height:18px;background:#c6d6df;box-shadow:inset 0 0 0 1px #b0b6bd"></div>
<div class="a" style="left:284px;top:397px;width:78px;height:18px;background:#c6d6df;box-shadow:inset 0 0 0 1px #b0b6bd"></div>
<div class="a" style="left:363px;top:397px;width:109px;height:18px;background:#c6d6df;box-shadow:inset 0 0 0 1px #b0b6bd"></div>
<div class="a" style="left:473px;top:397px;width:109px;height:18px;background:#c6d6df;box-shadow:inset 0 0 0 1px #b0b6bd"></div>
<div class="a" style="left:583px;top:397px;width:112px;height:18px;background:#c6d6df;box-shadow:inset 0 0 0 1px #b0b6bd"></div>
<div class="a cell" style="left:31px;top:397px;width:66px;color:#676775">GAGA</div>
<div class="a cell" style="left:100px;top:397px;width:182px;color:#676775">GAGA LADY</div>
<div class="a cell num" style="left:286px;top:397px;width:76px;color:#676775">0841057839</div>
<div class="a cell num" style="left:363px;top:397px;width:106px;text-align:right;color:#676775">2,802,800.00</div>
<div class="a cell num" style="left:473px;top:397px;width:106px;text-align:right;color:#676775">539,528.00</div>
<div class="a cell" style="left:584px;top:397px;width:93px;color:#0a0a0a;font-size:12.2px;letter-spacing:0.1px">CALCULATED</div>
<div class="a" style="left:677px;top:397px;width:18px;height:18px;background:#fff;box-shadow:inset 0 0 0 1px #b0b6bd"></div>
<svg class="a" style="left:682px;top:405px" width="9" height="6" viewBox="0 0 9 6"><path d="M0.5 0.5 L4.5 4.5 L8.5 0.5" stroke="#333" stroke-width="0.9" fill="none"/></svg>
<div class="a" style="left:9px;top:416px;width:19px;height:18px;background:#d4e2ec;box-shadow:inset 0 0 0 1px #b0b6bd"></div>
<div class="a" style="left:29px;top:416px;width:68px;height:18px;background:#d4e2ec;box-shadow:inset 0 0 0 1px #b0b6bd"></div>
<div class="a" style="left:98px;top:416px;width:185px;height:18px;background:#d4e2ec;box-shadow:inset 0 0 0 1px #b0b6bd"></div>
<div class="a" style="left:284px;top:416px;width:78px;height:18px;background:#d4e2ec;box-shadow:inset 0 0 0 1px #b0b6bd"></div>
<div class="a" style="left:363px;top:416px;width:109px;height:18px;background:#d4e2ec;box-shadow:inset 0 0 0 1px #b0b6bd"></div>
<div class="a" style="left:473px;top:416px;width:109px;height:18px;background:#d4e2ec;box-shadow:inset 0 0 0 1px #b0b6bd"></div>
<div class="a" style="left:583px;top:416px;width:112px;height:18px;background:#d4e2ec;box-shadow:inset 0 0 0 1px #b0b6bd"></div>
<div class="a cell" style="left:31px;top:416px;width:66px;color:#676775">GATES</div>
<div class="a cell" style="left:100px;top:416px;width:182px;color:#676775">GATES WILLIAM</div>
<div class="a cell num" style="left:286px;top:416px;width:76px;color:#676775">0658871199</div>
<div class="a cell num" style="left:363px;top:416px;width:106px;text-align:right;color:#676775">.00</div>
<div class="a cell num" style="left:473px;top:416px;width:106px;text-align:right;color:#676775">.00</div>
<div class="a cell" style="left:584px;top:416px;width:93px;color:#0a0a0a;font-size:12.2px;letter-spacing:0.1px">CALCULATED</div>
<div class="a" style="left:677px;top:416px;width:18px;height:18px;background:#fff;box-shadow:inset 0 0 0 1px #b0b6bd"></div>
<svg class="a" style="left:682px;top:424px" width="9" height="6" viewBox="0 0 9 6"><path d="M0.5 0.5 L4.5 4.5 L8.5 0.5" stroke="#333" stroke-width="0.9" fill="none"/></svg>
<div class="a" style="left:9px;top:435px;width:19px;height:18px;background:#c6d6df;box-shadow:inset 0 0 0 1px #b0b6bd"></div>
<div class="a" style="left:29px;top:435px;width:68px;height:18px;background:#c6d6df;box-shadow:inset 0 0 0 1px #b0b6bd"></div>
<div class="a" style="left:98px;top:435px;width:185px;height:18px;background:#c6d6df;box-shadow:inset 0 0 0 1px #b0b6bd"></div>
<div class="a" style="left:284px;top:435px;width:78px;height:18px;background:#c6d6df;box-shadow:inset 0 0 0 1px #b0b6bd"></div>
<div class="a" style="left:363px;top:435px;width:109px;height:18px;background:#c6d6df;box-shadow:inset 0 0 0 1px #b0b6bd"></div>
<div class="a" style="left:473px;top:435px;width:109px;height:18px;background:#c6d6df;box-shadow:inset 0 0 0 1px #b0b6bd"></div>
<div class="a" style="left:583px;top:435px;width:112px;height:18px;background:#c6d6df;box-shadow:inset 0 0 0 1px #b0b6bd"></div>
<div class="a cell" style="left:31px;top:435px;width:66px;color:#676775">GIMP</div>
<div class="a cell" style="left:100px;top:435px;width:182px;color:#676775">ACCFIN SOFTWARE (PTY) LTD</div>
<div class="a cell num" style="left:286px;top:435px;width:76px;color:#676775">9422832155</div>
<div class="a cell num" style="left:363px;top:435px;width:106px;text-align:right;color:#676775">1,596,996.00</div>
<div class="a cell num" style="left:473px;top:435px;width:106px;text-align:right;color:#676775">223,579.44</div>
<div class="a cell" style="left:584px;top:435px;width:93px;color:#0a0a0a;font-size:12.2px;letter-spacing:0.1px">CALCULATED</div>
<div class="a" style="left:677px;top:435px;width:18px;height:18px;background:#fff;box-shadow:inset 0 0 0 1px #b0b6bd"></div>
<svg class="a" style="left:682px;top:443px" width="9" height="6" viewBox="0 0 9 6"><path d="M0.5 0.5 L4.5 4.5 L8.5 0.5" stroke="#333" stroke-width="0.9" fill="none"/></svg>
<div class="a" style="left:9px;top:454px;width:19px;height:18px;background:#d4e2ec;box-shadow:inset 0 0 0 1px #b0b6bd"></div>
<div class="a" style="left:29px;top:454px;width:68px;height:18px;background:#d4e2ec;box-shadow:inset 0 0 0 1px #b0b6bd"></div>
<div class="a" style="left:98px;top:454px;width:185px;height:18px;background:#d4e2ec;box-shadow:inset 0 0 0 1px #b0b6bd"></div>
<div class="a" style="left:284px;top:454px;width:78px;height:18px;background:#d4e2ec;box-shadow:inset 0 0 0 1px #b0b6bd"></div>
<div class="a" style="left:363px;top:454px;width:109px;height:18px;background:#d4e2ec;box-shadow:inset 0 0 0 1px #b0b6bd"></div>
<div class="a" style="left:473px;top:454px;width:109px;height:18px;background:#d4e2ec;box-shadow:inset 0 0 0 1px #b0b6bd"></div>
<div class="a" style="left:583px;top:454px;width:112px;height:18px;background:#d4e2ec;box-shadow:inset 0 0 0 1px #b0b6bd"></div>
<div class="a cell" style="left:31px;top:454px;width:66px;color:#676775">GOLDA</div>
<div class="a cell" style="left:100px;top:454px;width:182px;color:#676775">GOLDSMITH AARON</div>
<div class="a cell num" style="left:286px;top:454px;width:76px;color:#676775">1344005846</div>
<div class="a cell num" style="left:363px;top:454px;width:106px;text-align:right;color:#676775">200,000.00</div>
<div class="a cell num" style="left:473px;top:454px;width:106px;text-align:right;color:#676775">10,143.00</div>
<div class="a cell" style="left:584px;top:454px;width:93px;color:#0a0a0a;font-size:12.2px;letter-spacing:0.1px">CALCULATED</div>
<div class="a" style="left:677px;top:454px;width:18px;height:18px;background:#fff;box-shadow:inset 0 0 0 1px #b0b6bd"></div>
<svg class="a" style="left:682px;top:462px" width="9" height="6" viewBox="0 0 9 6"><path d="M0.5 0.5 L4.5 4.5 L8.5 0.5" stroke="#333" stroke-width="0.9" fill="none"/></svg>
<div class="a" style="left:9px;top:473px;width:19px;height:18px;background:#c6d6df;box-shadow:inset 0 0 0 1px #b0b6bd"></div>
<div class="a" style="left:29px;top:473px;width:68px;height:18px;background:#c6d6df;box-shadow:inset 0 0 0 1px #b0b6bd"></div>
<div class="a" style="left:98px;top:473px;width:185px;height:18px;background:#c6d6df;box-shadow:inset 0 0 0 1px #b0b6bd"></div>
<div class="a" style="left:284px;top:473px;width:78px;height:18px;background:#c6d6df;box-shadow:inset 0 0 0 1px #b0b6bd"></div>
<div class="a" style="left:363px;top:473px;width:109px;height:18px;background:#c6d6df;box-shadow:inset 0 0 0 1px #b0b6bd"></div>
<div class="a" style="left:473px;top:473px;width:109px;height:18px;background:#c6d6df;box-shadow:inset 0 0 0 1px #b0b6bd"></div>
<div class="a" style="left:583px;top:473px;width:112px;height:18px;background:#c6d6df;box-shadow:inset 0 0 0 1px #b0b6bd"></div>
<div class="a cell" style="left:31px;top:473px;width:66px;color:#676775">GON01</div>
<div class="a cell" style="left:100px;top:473px;width:182px;color:#676775">GONTSANA WENDY PHILILE</div>
<div class="a cell num" style="left:286px;top:473px;width:76px;color:#676775">1138522154</div>
<div class="a cell num" style="left:363px;top:473px;width:106px;text-align:right;color:#676775">.00</div>
<div class="a cell num" style="left:473px;top:473px;width:106px;text-align:right;color:#676775">.00</div>
<div class="a cell" style="left:584px;top:473px;width:93px;color:#0a0a0a;font-size:12.2px;letter-spacing:0.1px">CALCULATED</div>
<div class="a" style="left:677px;top:473px;width:18px;height:18px;background:#fff;box-shadow:inset 0 0 0 1px #b0b6bd"></div>
<svg class="a" style="left:682px;top:481px" width="9" height="6" viewBox="0 0 9 6"><path d="M0.5 0.5 L4.5 4.5 L8.5 0.5" stroke="#333" stroke-width="0.9" fill="none"/></svg>
<div class="a" style="left:9px;top:492px;width:19px;height:18px;background:#d4e2ec;box-shadow:inset 0 0 0 1px #b0b6bd"></div>
<div class="a" style="left:29px;top:492px;width:68px;height:18px;background:#d4e2ec;box-shadow:inset 0 0 0 1px #b0b6bd"></div>
<div class="a" style="left:98px;top:492px;width:185px;height:18px;background:#d4e2ec;box-shadow:inset 0 0 0 1px #b0b6bd"></div>
<div class="a" style="left:284px;top:492px;width:78px;height:18px;background:#d4e2ec;box-shadow:inset 0 0 0 1px #b0b6bd"></div>
<div class="a" style="left:363px;top:492px;width:109px;height:18px;background:#d4e2ec;box-shadow:inset 0 0 0 1px #b0b6bd"></div>
<div class="a" style="left:473px;top:492px;width:109px;height:18px;background:#d4e2ec;box-shadow:inset 0 0 0 1px #b0b6bd"></div>
<div class="a" style="left:583px;top:492px;width:112px;height:18px;background:#d4e2ec;box-shadow:inset 0 0 0 1px #b0b6bd"></div>
<div class="a cell" style="left:31px;top:492px;width:66px;color:#676775">GUPTAA</div>
<div class="a cell" style="left:100px;top:492px;width:182px;color:#676775">GUPTA ATUL</div>
<div class="a cell num" style="left:286px;top:492px;width:76px;color:#676775">0097087878</div>
<div class="a cell num" style="left:363px;top:492px;width:106px;text-align:right;color:#676775">.00</div>
<div class="a cell num" style="left:473px;top:492px;width:106px;text-align:right;color:#676775">.00</div>
<div class="a cell" style="left:584px;top:492px;width:93px;color:#0a0a0a;font-size:12.2px;letter-spacing:0.1px">CALCULATED</div>
<div class="a" style="left:677px;top:492px;width:18px;height:18px;background:#fff;box-shadow:inset 0 0 0 1px #b0b6bd"></div>
<svg class="a" style="left:682px;top:500px" width="9" height="6" viewBox="0 0 9 6"><path d="M0.5 0.5 L4.5 4.5 L8.5 0.5" stroke="#333" stroke-width="0.9" fill="none"/></svg>
<div class="a" style="left:9px;top:511px;width:19px;height:18px;background:#c6d6df;box-shadow:inset 0 0 0 1px #b0b6bd"></div>
<div class="a" style="left:29px;top:511px;width:68px;height:18px;background:#c6d6df;box-shadow:inset 0 0 0 1px #b0b6bd"></div>
<div class="a" style="left:98px;top:511px;width:185px;height:18px;background:#c6d6df;box-shadow:inset 0 0 0 1px #b0b6bd"></div>
<div class="a" style="left:284px;top:511px;width:78px;height:18px;background:#c6d6df;box-shadow:inset 0 0 0 1px #b0b6bd"></div>
<div class="a" style="left:363px;top:511px;width:109px;height:18px;background:#c6d6df;box-shadow:inset 0 0 0 1px #b0b6bd"></div>
<div class="a" style="left:473px;top:511px;width:109px;height:18px;background:#c6d6df;box-shadow:inset 0 0 0 1px #b0b6bd"></div>
<div class="a" style="left:583px;top:511px;width:112px;height:18px;background:#c6d6df;box-shadow:inset 0 0 0 1px #b0b6bd"></div>
<div class="a cell" style="left:31px;top:511px;width:66px;color:#676775">HUGE01</div>
<div class="a cell" style="left:100px;top:511px;width:182px;color:#676775">HUGE CONSTRUCTION (PTY) LTD</div>
<div class="a cell num" style="left:286px;top:511px;width:76px;color:#676775">9757575759</div>
<div class="a cell num" style="left:363px;top:511px;width:106px;text-align:right;color:#676775">500,000.00</div>
<div class="a cell num" style="left:473px;top:511px;width:106px;text-align:right;color:#676775">70,000.00</div>
<div class="a cell" style="left:584px;top:511px;width:93px;color:#0a0a0a;font-size:12.2px;letter-spacing:0.1px">CALCULATED</div>
<div class="a" style="left:677px;top:511px;width:18px;height:18px;background:#fff;box-shadow:inset 0 0 0 1px #b0b6bd"></div>
<svg class="a" style="left:682px;top:519px" width="9" height="6" viewBox="0 0 9 6"><path d="M0.5 0.5 L4.5 4.5 L8.5 0.5" stroke="#333" stroke-width="0.9" fill="none"/></svg>
<div class="a" style="left:9px;top:530px;width:19px;height:18px;background:#d4e2ec;box-shadow:inset 0 0 0 1px #b0b6bd"></div>
<div class="a" style="left:29px;top:530px;width:68px;height:18px;background:#d4e2ec;box-shadow:inset 0 0 0 1px #b0b6bd"></div>
<div class="a" style="left:98px;top:530px;width:185px;height:18px;background:#d4e2ec;box-shadow:inset 0 0 0 1px #b0b6bd"></div>
<div class="a" style="left:284px;top:530px;width:78px;height:18px;background:#d4e2ec;box-shadow:inset 0 0 0 1px #b0b6bd"></div>
<div class="a" style="left:363px;top:530px;width:109px;height:18px;background:#d4e2ec;box-shadow:inset 0 0 0 1px #b0b6bd"></div>
<div class="a" style="left:473px;top:530px;width:109px;height:18px;background:#d4e2ec;box-shadow:inset 0 0 0 1px #b0b6bd"></div>
<div class="a" style="left:583px;top:530px;width:112px;height:18px;background:#d4e2ec;box-shadow:inset 0 0 0 1px #b0b6bd"></div>
<div class="a cell" style="left:31px;top:530px;width:66px;color:#676775">KARD003</div>
<div class="a cell" style="left:100px;top:530px;width:182px;color:#676775">KARDASHIAN INVESTMENTS (PTY)</div>
<div class="a cell num" style="left:286px;top:530px;width:76px;color:#676775">0658871199</div>
<div class="a cell num" style="left:363px;top:530px;width:106px;text-align:right;color:#676775">.00</div>
<div class="a cell num" style="left:473px;top:530px;width:106px;text-align:right;color:#676775">.00</div>
<div class="a cell" style="left:584px;top:530px;width:93px;color:#0a0a0a;font-size:12.2px;letter-spacing:0.1px">CALCULATED</div>
<div class="a" style="left:677px;top:530px;width:18px;height:18px;background:#fff;box-shadow:inset 0 0 0 1px #b0b6bd"></div>
<svg class="a" style="left:682px;top:538px" width="9" height="6" viewBox="0 0 9 6"><path d="M0.5 0.5 L4.5 4.5 L8.5 0.5" stroke="#333" stroke-width="0.9" fill="none"/></svg>
<div class="a" style="left:9px;top:549px;width:19px;height:18px;background:#c6d6df;box-shadow:inset 0 0 0 1px #b0b6bd"></div>
<div class="a" style="left:29px;top:549px;width:68px;height:18px;background:#c6d6df;box-shadow:inset 0 0 0 1px #b0b6bd"></div>
<div class="a" style="left:98px;top:549px;width:185px;height:18px;background:#c6d6df;box-shadow:inset 0 0 0 1px #b0b6bd"></div>
<div class="a" style="left:284px;top:549px;width:78px;height:18px;background:#c6d6df;box-shadow:inset 0 0 0 1px #b0b6bd"></div>
<div class="a" style="left:363px;top:549px;width:109px;height:18px;background:#c6d6df;box-shadow:inset 0 0 0 1px #b0b6bd"></div>
<div class="a" style="left:473px;top:549px;width:109px;height:18px;background:#c6d6df;box-shadow:inset 0 0 0 1px #b0b6bd"></div>
<div class="a" style="left:583px;top:549px;width:112px;height:18px;background:#c6d6df;box-shadow:inset 0 0 0 1px #b0b6bd"></div>
<div class="a cell" style="left:31px;top:549px;width:66px;color:#676775">KHUM001</div>
<div class="a cell" style="left:100px;top:549px;width:182px;color:#676775">KHUMALO TERVINE MALUSI</div>
<div class="a cell num" style="left:286px;top:549px;width:76px;color:#676775">1199153642</div>
<div class="a cell num" style="left:363px;top:549px;width:106px;text-align:right;color:#676775">.00</div>
<div class="a cell num" style="left:473px;top:549px;width:106px;text-align:right;color:#676775">.00</div>
<div class="a cell" style="left:584px;top:549px;width:93px;color:#0a0a0a;font-size:12.2px;letter-spacing:0.1px">CALCULATED</div>
<div class="a" style="left:677px;top:549px;width:18px;height:18px;background:#fff;box-shadow:inset 0 0 0 1px #b0b6bd"></div>
<svg class="a" style="left:682px;top:557px" width="9" height="6" viewBox="0 0 9 6"><path d="M0.5 0.5 L4.5 4.5 L8.5 0.5" stroke="#333" stroke-width="0.9" fill="none"/></svg>
<div class="a" style="left:9px;top:568px;width:19px;height:18px;background:#d4e2ec;box-shadow:inset 0 0 0 1px #b0b6bd"></div>
<div class="a" style="left:29px;top:568px;width:68px;height:18px;background:#d4e2ec;box-shadow:inset 0 0 0 1px #b0b6bd"></div>
<div class="a" style="left:98px;top:568px;width:185px;height:18px;background:#d4e2ec;box-shadow:inset 0 0 0 1px #b0b6bd"></div>
<div class="a" style="left:284px;top:568px;width:78px;height:18px;background:#d4e2ec;box-shadow:inset 0 0 0 1px #b0b6bd"></div>
<div class="a" style="left:363px;top:568px;width:109px;height:18px;background:#d4e2ec;box-shadow:inset 0 0 0 1px #b0b6bd"></div>
<div class="a" style="left:473px;top:568px;width:109px;height:18px;background:#d4e2ec;box-shadow:inset 0 0 0 1px #b0b6bd"></div>
<div class="a" style="left:583px;top:568px;width:112px;height:18px;background:#d4e2ec;box-shadow:inset 0 0 0 1px #b0b6bd"></div>
<div class="a cell" style="left:31px;top:568px;width:66px;color:#676775">KNOW001</div>
<div class="a cell" style="left:100px;top:568px;width:182px;color:#676775">KNOWLES BRANDEN ARMY</div>
<div class="a cell num" style="left:286px;top:568px;width:76px;color:#676775">0812755155</div>
<div class="a cell num" style="left:363px;top:568px;width:106px;text-align:right;color:#676775">.00</div>
<div class="a cell num" style="left:473px;top:568px;width:106px;text-align:right;color:#676775">.00</div>
<div class="a cell" style="left:584px;top:568px;width:93px;color:#0a0a0a;font-size:12.2px;letter-spacing:0.1px">CALCULATED</div>
<div class="a" style="left:677px;top:568px;width:18px;height:18px;background:#fff;box-shadow:inset 0 0 0 1px #b0b6bd"></div>
<svg class="a" style="left:682px;top:576px" width="9" height="6" viewBox="0 0 9 6"><path d="M0.5 0.5 L4.5 4.5 L8.5 0.5" stroke="#333" stroke-width="0.9" fill="none"/></svg>
<div class="a" style="left:9px;top:587px;width:19px;height:18px;background:#c6d6df;box-shadow:inset 0 0 0 1px #b0b6bd"></div>
<div class="a" style="left:29px;top:587px;width:68px;height:18px;background:#c6d6df;box-shadow:inset 0 0 0 1px #b0b6bd"></div>
<div class="a" style="left:98px;top:587px;width:185px;height:18px;background:#c6d6df;box-shadow:inset 0 0 0 1px #b0b6bd"></div>
<div class="a" style="left:284px;top:587px;width:78px;height:18px;background:#c6d6df;box-shadow:inset 0 0 0 1px #b0b6bd"></div>
<div class="a" style="left:363px;top:587px;width:109px;height:18px;background:#c6d6df;box-shadow:inset 0 0 0 1px #b0b6bd"></div>
<div class="a" style="left:473px;top:587px;width:109px;height:18px;background:#c6d6df;box-shadow:inset 0 0 0 1px #b0b6bd"></div>
<div class="a" style="left:583px;top:587px;width:112px;height:18px;background:#c6d6df;box-shadow:inset 0 0 0 1px #b0b6bd"></div>
<div class="a cell" style="left:31px;top:587px;width:66px;color:#676775">LUCKY</div>
<div class="a cell" style="left:100px;top:587px;width:182px;color:#676775">DA SILVA EG16 LUCKY</div>
<div class="a cell num" style="left:286px;top:587px;width:76px;color:#676775">0461503641</div>
<div class="a cell num" style="left:363px;top:587px;width:106px;text-align:right;color:#676775">2,960,000.00</div>
<div class="a cell num" style="left:473px;top:587px;width:106px;text-align:right;color:#676775">579,204.50</div>
<div class="a cell" style="left:584px;top:587px;width:93px;color:#0a0a0a;font-size:12.2px;letter-spacing:0.1px">CALCULATED</div>
<div class="a" style="left:677px;top:587px;width:18px;height:18px;background:#fff;box-shadow:inset 0 0 0 1px #b0b6bd"></div>
<svg class="a" style="left:682px;top:595px" width="9" height="6" viewBox="0 0 9 6"><path d="M0.5 0.5 L4.5 4.5 L8.5 0.5" stroke="#333" stroke-width="0.9" fill="none"/></svg>
<div class="a" style="left:9px;top:606px;width:19px;height:18px;background:#d4e2ec;box-shadow:inset 0 0 0 1px #b0b6bd"></div>
<div class="a" style="left:29px;top:606px;width:68px;height:18px;background:#d4e2ec;box-shadow:inset 0 0 0 1px #b0b6bd"></div>
<div class="a" style="left:98px;top:606px;width:185px;height:18px;background:#d4e2ec;box-shadow:inset 0 0 0 1px #b0b6bd"></div>
<div class="a" style="left:284px;top:606px;width:78px;height:18px;background:#d4e2ec;box-shadow:inset 0 0 0 1px #b0b6bd"></div>
<div class="a" style="left:363px;top:606px;width:109px;height:18px;background:#d4e2ec;box-shadow:inset 0 0 0 1px #b0b6bd"></div>
<div class="a" style="left:473px;top:606px;width:109px;height:18px;background:#d4e2ec;box-shadow:inset 0 0 0 1px #b0b6bd"></div>
<div class="a" style="left:583px;top:606px;width:112px;height:18px;background:#d4e2ec;box-shadow:inset 0 0 0 1px #b0b6bd"></div>
<div class="a cell" style="left:31px;top:606px;width:66px;color:#676775">NAI001</div>
<div class="a cell" style="left:100px;top:606px;width:182px;color:#676775">NAIDOO MICHELLE</div>
<div class="a cell num" style="left:286px;top:606px;width:76px;color:#676775">1207156645</div>
<div class="a cell num" style="left:363px;top:606px;width:106px;text-align:right;color:#676775">1,980,000.00</div>
<div class="a cell num" style="left:473px;top:606px;width:106px;text-align:right;color:#676775">358,704.50</div>
<div class="a cell" style="left:584px;top:606px;width:93px;color:#0a0a0a;font-size:12.2px;letter-spacing:0.1px">CALCULATED</div>
<div class="a" style="left:677px;top:606px;width:18px;height:18px;background:#fff;box-shadow:inset 0 0 0 1px #b0b6bd"></div>
<svg class="a" style="left:682px;top:614px" width="9" height="6" viewBox="0 0 9 6"><path d="M0.5 0.5 L4.5 4.5 L8.5 0.5" stroke="#333" stroke-width="0.9" fill="none"/></svg>
<div class="a" style="left:9px;top:625px;width:19px;height:18px;background:#c6d6df;box-shadow:inset 0 0 0 1px #b0b6bd"></div>
<div class="a" style="left:29px;top:625px;width:68px;height:18px;background:#c6d6df;box-shadow:inset 0 0 0 1px #b0b6bd"></div>
<div class="a" style="left:98px;top:625px;width:185px;height:18px;background:#c6d6df;box-shadow:inset 0 0 0 1px #b0b6bd"></div>
<div class="a" style="left:284px;top:625px;width:78px;height:18px;background:#c6d6df;box-shadow:inset 0 0 0 1px #b0b6bd"></div>
<div class="a" style="left:363px;top:625px;width:109px;height:18px;background:#c6d6df;box-shadow:inset 0 0 0 1px #b0b6bd"></div>
<div class="a" style="left:473px;top:625px;width:109px;height:18px;background:#c6d6df;box-shadow:inset 0 0 0 1px #b0b6bd"></div>
<div class="a" style="left:583px;top:625px;width:112px;height:18px;background:#c6d6df;box-shadow:inset 0 0 0 1px #b0b6bd"></div>
<div class="a cell" style="left:31px;top:625px;width:66px;color:#676775">PAD001</div>
<div class="a cell" style="left:100px;top:625px;width:182px;color:#676775">PADAYACHE KIM RENE</div>
<div class="a cell num" style="left:286px;top:625px;width:76px;color:#676775">1207156645</div>
<div class="a cell num" style="left:363px;top:625px;width:106px;text-align:right;color:#676775">.00</div>
<div class="a cell num" style="left:473px;top:625px;width:106px;text-align:right;color:#676775">.00</div>
<div class="a cell" style="left:584px;top:625px;width:93px;color:#0a0a0a;font-size:12.2px;letter-spacing:0.1px">CALCULATED</div>
<div class="a" style="left:677px;top:625px;width:18px;height:18px;background:#fff;box-shadow:inset 0 0 0 1px #b0b6bd"></div>
<svg class="a" style="left:682px;top:633px" width="9" height="6" viewBox="0 0 9 6"><path d="M0.5 0.5 L4.5 4.5 L8.5 0.5" stroke="#333" stroke-width="0.9" fill="none"/></svg>
<div class="a" style="left:9px;top:644px;width:19px;height:18px;background:#d4e2ec;box-shadow:inset 0 0 0 1px #b0b6bd"></div>
<div class="a" style="left:29px;top:644px;width:68px;height:18px;background:#d4e2ec;box-shadow:inset 0 0 0 1px #b0b6bd"></div>
<div class="a" style="left:98px;top:644px;width:185px;height:18px;background:#d4e2ec;box-shadow:inset 0 0 0 1px #b0b6bd"></div>
<div class="a" style="left:284px;top:644px;width:78px;height:18px;background:#d4e2ec;box-shadow:inset 0 0 0 1px #b0b6bd"></div>
<div class="a" style="left:363px;top:644px;width:109px;height:18px;background:#d4e2ec;box-shadow:inset 0 0 0 1px #b0b6bd"></div>
<div class="a" style="left:473px;top:644px;width:109px;height:18px;background:#d4e2ec;box-shadow:inset 0 0 0 1px #b0b6bd"></div>
<div class="a" style="left:583px;top:644px;width:112px;height:18px;background:#d4e2ec;box-shadow:inset 0 0 0 1px #b0b6bd"></div>
<div class="a cell" style="left:31px;top:644px;width:66px;color:#676775">ROTHCHILD</div>
<div class="a cell" style="left:100px;top:644px;width:182px;color:#676775">ROTHCHILD PHILIP</div>
<div class="a cell num" style="left:286px;top:644px;width:76px;color:#676775">1070066640</div>
<div class="a cell num" style="left:363px;top:644px;width:106px;text-align:right;color:#676775">.00</div>
<div class="a cell num" style="left:473px;top:644px;width:106px;text-align:right;color:#676775">.00</div>
<div class="a cell" style="left:584px;top:644px;width:93px;color:#0a0a0a;font-size:12.2px;letter-spacing:0.1px">CALCULATED</div>
<div class="a" style="left:677px;top:644px;width:18px;height:18px;background:#fff;box-shadow:inset 0 0 0 1px #b0b6bd"></div>
<svg class="a" style="left:682px;top:652px" width="9" height="6" viewBox="0 0 9 6"><path d="M0.5 0.5 L4.5 4.5 L8.5 0.5" stroke="#333" stroke-width="0.9" fill="none"/></svg>
<div class="a" style="left:9px;top:663px;width:19px;height:18px;background:#c6d6df;box-shadow:inset 0 0 0 1px #b0b6bd"></div>
<div class="a" style="left:29px;top:663px;width:68px;height:18px;background:#c6d6df;box-shadow:inset 0 0 0 1px #b0b6bd"></div>
<div class="a" style="left:98px;top:663px;width:185px;height:18px;background:#c6d6df;box-shadow:inset 0 0 0 1px #b0b6bd"></div>
<div class="a" style="left:284px;top:663px;width:78px;height:18px;background:#c6d6df;box-shadow:inset 0 0 0 1px #b0b6bd"></div>
<div class="a" style="left:363px;top:663px;width:109px;height:18px;background:#c6d6df;box-shadow:inset 0 0 0 1px #b0b6bd"></div>
<div class="a" style="left:473px;top:663px;width:109px;height:18px;background:#c6d6df;box-shadow:inset 0 0 0 1px #b0b6bd"></div>
<div class="a" style="left:583px;top:663px;width:112px;height:18px;background:#c6d6df;box-shadow:inset 0 0 0 1px #b0b6bd"></div>
<div class="a cell" style="left:31px;top:663px;width:66px;color:#676775">SILB</div>
<div class="a cell" style="left:100px;top:663px;width:182px;color:#676775">SILBERMAN MARK</div>
<div class="a cell num" style="left:286px;top:663px;width:76px;color:#676775">0642698153</div>
<div class="a cell num" style="left:363px;top:663px;width:106px;text-align:right;color:#676775">150,000.00</div>
<div class="a cell num" style="left:473px;top:663px;width:106px;text-align:right;color:#676775">5,643.00</div>
<div class="a cell" style="left:584px;top:663px;width:93px;color:#0a0a0a;font-size:12.2px;letter-spacing:0.1px">CALCULATED</div>
<div class="a" style="left:677px;top:663px;width:18px;height:18px;background:#fff;box-shadow:inset 0 0 0 1px #b0b6bd"></div>
<svg class="a" style="left:682px;top:671px" width="9" height="6" viewBox="0 0 9 6"><path d="M0.5 0.5 L4.5 4.5 L8.5 0.5" stroke="#333" stroke-width="0.9" fill="none"/></svg>
<div class="a" style="left:9px;top:682px;width:19px;height:18px;background:#d4e2ec;box-shadow:inset 0 0 0 1px #b0b6bd"></div>
<div class="a" style="left:29px;top:682px;width:68px;height:18px;background:#d4e2ec;box-shadow:inset 0 0 0 1px #b0b6bd"></div>
<div class="a" style="left:98px;top:682px;width:185px;height:18px;background:#d4e2ec;box-shadow:inset 0 0 0 1px #b0b6bd"></div>
<div class="a" style="left:284px;top:682px;width:78px;height:18px;background:#d4e2ec;box-shadow:inset 0 0 0 1px #b0b6bd"></div>
<div class="a" style="left:363px;top:682px;width:109px;height:18px;background:#d4e2ec;box-shadow:inset 0 0 0 1px #b0b6bd"></div>
<div class="a" style="left:473px;top:682px;width:109px;height:18px;background:#d4e2ec;box-shadow:inset 0 0 0 1px #b0b6bd"></div>
<div class="a" style="left:583px;top:682px;width:112px;height:18px;background:#d4e2ec;box-shadow:inset 0 0 0 1px #b0b6bd"></div>
<div class="a cell" style="left:31px;top:682px;width:66px;color:#676775">SMARTY</div>
<div class="a cell" style="left:100px;top:682px;width:182px;color:#676775">PANTS SMARTY</div>
<div class="a cell num" style="left:286px;top:682px;width:76px;color:#676775">2134567896</div>
<div class="a cell num" style="left:363px;top:682px;width:106px;text-align:right;color:#676775">4,000,000.00</div>
<div class="a cell num" style="left:473px;top:682px;width:106px;text-align:right;color:#676775">813,204.50</div>
<div class="a cell" style="left:584px;top:682px;width:93px;color:#0a0a0a;font-size:12.2px;letter-spacing:0.1px">CALCULATED</div>
<div class="a" style="left:677px;top:682px;width:18px;height:18px;background:#fff;box-shadow:inset 0 0 0 1px #b0b6bd"></div>
<svg class="a" style="left:682px;top:690px" width="9" height="6" viewBox="0 0 9 6"><path d="M0.5 0.5 L4.5 4.5 L8.5 0.5" stroke="#333" stroke-width="0.9" fill="none"/></svg>
<div class="a" style="left:9px;top:701px;width:19px;height:18px;background:#c6d6df;box-shadow:inset 0 0 0 1px #b0b6bd"></div>
<div class="a" style="left:29px;top:701px;width:68px;height:18px;background:#c6d6df;box-shadow:inset 0 0 0 1px #b0b6bd"></div>
<div class="a" style="left:98px;top:701px;width:185px;height:18px;background:#c6d6df;box-shadow:inset 0 0 0 1px #b0b6bd"></div>
<div class="a" style="left:284px;top:701px;width:78px;height:18px;background:#c6d6df;box-shadow:inset 0 0 0 1px #b0b6bd"></div>
<div class="a" style="left:363px;top:701px;width:109px;height:18px;background:#c6d6df;box-shadow:inset 0 0 0 1px #b0b6bd"></div>
<div class="a" style="left:473px;top:701px;width:109px;height:18px;background:#c6d6df;box-shadow:inset 0 0 0 1px #b0b6bd"></div>
<div class="a" style="left:583px;top:701px;width:112px;height:18px;background:#c6d6df;box-shadow:inset 0 0 0 1px #b0b6bd"></div>
<div class="a cell" style="left:31px;top:701px;width:66px;color:#676775">SMIT003</div>
<div class="a cell" style="left:100px;top:701px;width:182px;color:#676775">SMITH DAWN PRETTY</div>
<div class="a cell num" style="left:286px;top:701px;width:76px;color:#676775">1629201649</div>
<div class="a cell num" style="left:363px;top:701px;width:106px;text-align:right;color:#676775">300,000.00</div>
<div class="a cell num" style="left:473px;top:701px;width:106px;text-align:right;color:#676775">22,495.00</div>
<div class="a cell" style="left:584px;top:701px;width:93px;color:#0a0a0a;font-size:12.2px;letter-spacing:0.1px">CALCULATED</div>
<div class="a" style="left:677px;top:701px;width:18px;height:18px;background:#fff;box-shadow:inset 0 0 0 1px #b0b6bd"></div>
<svg class="a" style="left:682px;top:709px" width="9" height="6" viewBox="0 0 9 6"><path d="M0.5 0.5 L4.5 4.5 L8.5 0.5" stroke="#333" stroke-width="0.9" fill="none"/></svg>
<div class="a" style="left:9px;top:720px;width:19px;height:18px;background:#d4e2ec;box-shadow:inset 0 0 0 1px #b0b6bd"></div>
<div class="a" style="left:29px;top:720px;width:68px;height:18px;background:#d4e2ec;box-shadow:inset 0 0 0 1px #b0b6bd"></div>
<div class="a" style="left:98px;top:720px;width:185px;height:18px;background:#d4e2ec;box-shadow:inset 0 0 0 1px #b0b6bd"></div>
<div class="a" style="left:284px;top:720px;width:78px;height:18px;background:#d4e2ec;box-shadow:inset 0 0 0 1px #b0b6bd"></div>
<div class="a" style="left:363px;top:720px;width:109px;height:18px;background:#d4e2ec;box-shadow:inset 0 0 0 1px #b0b6bd"></div>
<div class="a" style="left:473px;top:720px;width:109px;height:18px;background:#d4e2ec;box-shadow:inset 0 0 0 1px #b0b6bd"></div>
<div class="a" style="left:583px;top:720px;width:112px;height:18px;background:#d4e2ec;box-shadow:inset 0 0 0 1px #b0b6bd"></div>
<div class="a cell" style="left:31px;top:720px;width:66px;color:#676775">SMITHM</div>
<div class="a cell" style="left:100px;top:720px;width:182px;color:#676775">SMITH MICHAEL</div>
<div class="a cell num" style="left:286px;top:720px;width:76px;color:#676775">1681078844</div>
<div class="a cell num" style="left:363px;top:720px;width:106px;text-align:right;color:#676775">.00</div>
<div class="a cell num" style="left:473px;top:720px;width:106px;text-align:right;color:#676775">.00</div>
<div class="a cell" style="left:584px;top:720px;width:93px;color:#0a0a0a;font-size:12.2px;letter-spacing:0.1px">PREPARED FOR</div>
<div class="a" style="left:677px;top:720px;width:18px;height:18px;background:#fff;box-shadow:inset 0 0 0 1px #b0b6bd"></div>
<svg class="a" style="left:682px;top:728px" width="9" height="6" viewBox="0 0 9 6"><path d="M0.5 0.5 L4.5 4.5 L8.5 0.5" stroke="#333" stroke-width="0.9" fill="none"/></svg>
<div class="a" style="left:9px;top:739px;width:19px;height:18px;background:#c6d6df;box-shadow:inset 0 0 0 1px #b0b6bd"></div>
<div class="a" style="left:29px;top:739px;width:68px;height:18px;background:#c6d6df;box-shadow:inset 0 0 0 1px #b0b6bd"></div>
<div class="a" style="left:98px;top:739px;width:185px;height:18px;background:#c6d6df;box-shadow:inset 0 0 0 1px #b0b6bd"></div>
<div class="a" style="left:284px;top:739px;width:78px;height:18px;background:#c6d6df;box-shadow:inset 0 0 0 1px #b0b6bd"></div>
<div class="a" style="left:363px;top:739px;width:109px;height:18px;background:#c6d6df;box-shadow:inset 0 0 0 1px #b0b6bd"></div>
<div class="a" style="left:473px;top:739px;width:109px;height:18px;background:#c6d6df;box-shadow:inset 0 0 0 1px #b0b6bd"></div>
<div class="a" style="left:583px;top:739px;width:112px;height:18px;background:#c6d6df;box-shadow:inset 0 0 0 1px #b0b6bd"></div>
<div class="a cell" style="left:31px;top:739px;width:66px;color:#676775">SNAZZY</div>
<div class="a cell" style="left:100px;top:739px;width:182px;color:#676775">SNAZZY SOFTWARE COMPANY SA</div>
<div class="a cell num" style="left:286px;top:739px;width:76px;color:#676775">9123456783</div>
<div class="a cell num" style="left:363px;top:739px;width:106px;text-align:right;color:#676775">2,480,000.00</div>
<div class="a cell num" style="left:473px;top:739px;width:106px;text-align:right;color:#676775">347,200.00</div>
<div class="a cell" style="left:584px;top:739px;width:93px;color:#0a0a0a;font-size:12.2px;letter-spacing:0.1px">CALCULATED</div>
<div class="a" style="left:677px;top:739px;width:18px;height:18px;background:#fff;box-shadow:inset 0 0 0 1px #b0b6bd"></div>
<svg class="a" style="left:682px;top:747px" width="9" height="6" viewBox="0 0 9 6"><path d="M0.5 0.5 L4.5 4.5 L8.5 0.5" stroke="#333" stroke-width="0.9" fill="none"/></svg>
<div class="a" style="left:9px;top:758px;width:19px;height:18px;background:#d4e2ec;box-shadow:inset 0 0 0 1px #b0b6bd"></div>
<div class="a" style="left:29px;top:758px;width:68px;height:18px;background:#d4e2ec;box-shadow:inset 0 0 0 1px #b0b6bd"></div>
<div class="a" style="left:98px;top:758px;width:185px;height:18px;background:#d4e2ec;box-shadow:inset 0 0 0 1px #b0b6bd"></div>
<div class="a" style="left:284px;top:758px;width:78px;height:18px;background:#d4e2ec;box-shadow:inset 0 0 0 1px #b0b6bd"></div>
<div class="a" style="left:363px;top:758px;width:109px;height:18px;background:#d4e2ec;box-shadow:inset 0 0 0 1px #b0b6bd"></div>
<div class="a" style="left:473px;top:758px;width:109px;height:18px;background:#d4e2ec;box-shadow:inset 0 0 0 1px #b0b6bd"></div>
<div class="a" style="left:583px;top:758px;width:112px;height:18px;background:#d4e2ec;box-shadow:inset 0 0 0 1px #b0b6bd"></div>
<div class="a cell" style="left:31px;top:758px;width:66px;color:#676775">THEMS</div>
<div class="a cell" style="left:100px;top:758px;width:182px;color:#676775">THE MS TRUST</div>
<div class="a cell num" style="left:286px;top:758px;width:76px;color:#676775">1111111116</div>
<div class="a cell num" style="left:363px;top:758px;width:106px;text-align:right;color:#676775">.00</div>
<div class="a cell num" style="left:473px;top:758px;width:106px;text-align:right;color:#676775">.00</div>
<div class="a cell" style="left:584px;top:758px;width:93px;color:#0a0a0a;font-size:12.2px;letter-spacing:0.1px">CALCULATED</div>
<div class="a" style="left:677px;top:758px;width:18px;height:18px;background:#fff;box-shadow:inset 0 0 0 1px #b0b6bd"></div>
<svg class="a" style="left:682px;top:766px" width="9" height="6" viewBox="0 0 9 6"><path d="M0.5 0.5 L4.5 4.5 L8.5 0.5" stroke="#333" stroke-width="0.9" fill="none"/></svg>
<div class="a" style="left:9px;top:777px;width:19px;height:18px;background:#c6d6df;box-shadow:inset 0 0 0 1px #b0b6bd"></div>
<div class="a" style="left:29px;top:777px;width:68px;height:18px;background:#c6d6df;box-shadow:inset 0 0 0 1px #b0b6bd"></div>
<div class="a" style="left:98px;top:777px;width:185px;height:18px;background:#c6d6df;box-shadow:inset 0 0 0 1px #b0b6bd"></div>
<div class="a" style="left:284px;top:777px;width:78px;height:18px;background:#c6d6df;box-shadow:inset 0 0 0 1px #b0b6bd"></div>
<div class="a" style="left:363px;top:777px;width:109px;height:18px;background:#c6d6df;box-shadow:inset 0 0 0 1px #b0b6bd"></div>
<div class="a" style="left:473px;top:777px;width:109px;height:18px;background:#c6d6df;box-shadow:inset 0 0 0 1px #b0b6bd"></div>
<div class="a" style="left:583px;top:777px;width:112px;height:18px;background:#c6d6df;box-shadow:inset 0 0 0 1px #b0b6bd"></div>
<div class="a cell" style="left:31px;top:777px;width:66px;color:#676775">TRIAL</div>
<div class="a cell" style="left:100px;top:777px;width:182px;color:#676775">BALANCE</div>
<div class="a cell num" style="left:286px;top:777px;width:76px;color:#676775">9222222227</div>
<div class="a cell num" style="left:363px;top:777px;width:106px;text-align:right;color:#676775">.00</div>
<div class="a cell num" style="left:473px;top:777px;width:106px;text-align:right;color:#676775">.00</div>
<div class="a cell" style="left:584px;top:777px;width:93px;color:#0a0a0a;font-size:12.2px;letter-spacing:0.1px">PREPARED FOR</div>
<div class="a" style="left:677px;top:777px;width:18px;height:18px;background:#fff;box-shadow:inset 0 0 0 1px #b0b6bd"></div>
<svg class="a" style="left:682px;top:785px" width="9" height="6" viewBox="0 0 9 6"><path d="M0.5 0.5 L4.5 4.5 L8.5 0.5" stroke="#333" stroke-width="0.9" fill="none"/></svg>
<div class="a" style="left:9px;top:796px;width:19px;height:18px;background:#d4e2ec;box-shadow:inset 0 0 0 1px #b0b6bd"></div>
<div class="a" style="left:29px;top:796px;width:68px;height:18px;background:#d4e2ec;box-shadow:inset 0 0 0 1px #b0b6bd"></div>
<div class="a" style="left:98px;top:796px;width:185px;height:18px;background:#d4e2ec;box-shadow:inset 0 0 0 1px #b0b6bd"></div>
<div class="a" style="left:284px;top:796px;width:78px;height:18px;background:#d4e2ec;box-shadow:inset 0 0 0 1px #b0b6bd"></div>
<div class="a" style="left:363px;top:796px;width:109px;height:18px;background:#d4e2ec;box-shadow:inset 0 0 0 1px #b0b6bd"></div>
<div class="a" style="left:473px;top:796px;width:109px;height:18px;background:#d4e2ec;box-shadow:inset 0 0 0 1px #b0b6bd"></div>
<div class="a" style="left:583px;top:796px;width:112px;height:18px;background:#d4e2ec;box-shadow:inset 0 0 0 1px #b0b6bd"></div>
<div class="a cell" style="left:31px;top:796px;width:66px;color:#676775">VANMER</div>
<div class="a cell" style="left:100px;top:796px;width:182px;color:#676775">VAN DER MERWE DAVID TRUST</div>
<div class="a cell num" style="left:286px;top:796px;width:76px;color:#676775">1698726144</div>
<div class="a cell num" style="left:363px;top:796px;width:106px;text-align:right;color:#676775">.00</div>
<div class="a cell num" style="left:473px;top:796px;width:106px;text-align:right;color:#676775">.00</div>
<div class="a cell" style="left:584px;top:796px;width:93px;color:#0a0a0a;font-size:12.2px;letter-spacing:0.1px">CALCULATED</div>
<div class="a" style="left:677px;top:796px;width:18px;height:18px;background:#fff;box-shadow:inset 0 0 0 1px #b0b6bd"></div>
<svg class="a" style="left:682px;top:804px" width="9" height="6" viewBox="0 0 9 6"><path d="M0.5 0.5 L4.5 4.5 L8.5 0.5" stroke="#333" stroke-width="0.9" fill="none"/></svg>
<div class="a" style="left:698px;top:188px;width:15px;height:614px;background:#f0f0f0"></div>
<svg class="a" style="left:701px;top:193px" width="10" height="7" viewBox="0 0 10 7"><path d="M1 5.5 L5 1.5 L9 5.5" stroke="#333" stroke-width="1.4" fill="none"/></svg>
<div class="a" style="left:698px;top:205px;width:15px;height:581px;background:#a6a6a6"></div>
<div class="a ttl" style="left:746px;top:38px"><span style="letter-spacing:-0.4px">YEAR SELECTION</span></div>
<div class="a tab" style="left:866px;top:38px;width:80px;height:12px;line-height:15px;background:linear-gradient(#eaf5fb,#cfe5f1)">Year Selection</div>
<div class="a panel" style="left:728px;top:50px;width:660px;height:94px;border-radius:0 0 0 5px"></div>
<div class="a" style="left:728px;top:50px;width:17px;height:17px"><svg width="17" height="17" viewBox="0 0 17 17"><defs><linearGradient id="og" x1="0.3" y1="1" x2="0.9" y2="0"><stop offset="0" stop-color="#ff6600"/><stop offset="0.6" stop-color="#ff8c00"/><stop offset="1" stop-color="#ffaa00"/></linearGradient></defs><path d="M0 0 H17 L0 17z" fill="#0c4c76"/><path d="M0 17 L17 0 V12 Q17 17 12 17 Z" fill="url(#og)"/><path d="M0.5 16.5 H12 Q16.5 16.5 16.5 12" stroke="#d85000" stroke-width="0.8" fill="none" opacity="0.6"/></svg></div>
<div class="a lbl" style="right:564px;top:74px;height:20px;line-height:20px;">Tax Year</div>
<div class="a inp" style="left:825px;top:73px;width:46px;height:20px;text-align:left;line-height:18px;">2022</div>
<div class="a lbl" style="right:564px;top:97px;height:20px;line-height:20px;">Due Date</div>
<div class="a inp" style="left:825px;top:96px;width:91px;height:20px;text-align:left;line-height:18px;">31/08/2021</div>
<div class="a btn" style="left:896px;top:98px;width:18px;height:16px;line-height:16px;font-size:11px;color:#111;font-weight:bold;letter-spacing:0.4px;padding-left:1px">...</div>
<div class="a lbl" style="right:376px;top:74px;height:20px;line-height:20px;">Year end Month</div>
<div class="a inp" style="left:1012px;top:73px;width:90px;height:20px;text-align:left;line-height:18px;">February</div>
<div class="a lbl" style="right:376px;top:97px;height:20px;line-height:20px;">Assess Cutoff</div>
<div class="a inp" style="left:1012px;top:96px;width:90px;height:20px;text-align:left;line-height:18px;">16/08/2021</div>
<div class="a btn" style="left:1083px;top:98px;width:18px;height:16px;line-height:16px;font-size:11px;color:#111;font-weight:bold;letter-spacing:0.4px;padding-left:1px">...</div>
<div class="a lbl" style="right:93px;top:74px;height:20px;line-height:20px;">Reply Date</div>
<div class="a inp" style="left:1296px;top:73px;width:104px;height:20px;text-align:left;line-height:18px;">26/08/2021</div>
<div class="a btn" style="left:1367px;top:75px;width:18px;height:16px;line-height:16px;font-size:11px;color:#111;font-weight:bold;letter-spacing:0.4px;padding-left:1px">...</div>
<div class="a ttl" style="left:746px;top:162px">P1 REVIEW</div>
<div class="a tab" style="left:866px;top:162px;width:79px;height:12px;line-height:15px;background:linear-gradient(#eaf5fb,#cfe5f1)">P1 Review</div>
<div class="a tab" style="left:947px;top:162px;width:79px;height:12px;line-height:15px;background:linear-gradient(90deg,#a9d0e8,#c4e0f0)">Documents</div>
<div class="a panel" style="left:728px;top:174px;width:660px;height:640px;"></div>
<div class="a" style="left:728px;top:174px;width:17px;height:17px"><svg width="17" height="17" viewBox="0 0 17 17"><defs><linearGradient id="og" x1="0.3" y1="1" x2="0.9" y2="0"><stop offset="0" stop-color="#ff6600"/><stop offset="0.6" stop-color="#ff8c00"/><stop offset="1" stop-color="#ffaa00"/></linearGradient></defs><path d="M0 0 H17 L0 17z" fill="#0d4f77"/><path d="M0 17 L17 0 V12 Q17 17 12 17 Z" fill="url(#og)"/><path d="M0.5 16.5 H12 Q16.5 16.5 16.5 12" stroke="#d85000" stroke-width="0.8" fill="none" opacity="0.6"/></svg></div>
<svg class="a" style="left:754px;top:178px" width="14" height="16" viewBox="0 0 14 16"><path d="M0.5 0.5 h9 l4 4 v11 h-13z" fill="#a9b0b6"/><path d="M9.5 0.5 v4 h4" fill="#c8ced3"/></svg>
<svg class="a" style="left:772px;top:178px" width="14" height="16" viewBox="0 0 14 16"><rect x="0.5" y="1.5" width="11" height="14" fill="#f4f8fc" stroke="#6a8ab0"/><path d="M2.5 5 h6 M2.5 8 h6 M2.5 11 h4" stroke="#9ab"/><path d="M6 12 L13 3 L14.5 4.5 L7.5 13 L5.5 13.5z" fill="#3cb040"/></svg>
<svg class="a" style="left:789px;top:178px" width="15" height="16" viewBox="0 0 15 16"><path d="M2 2 L13 14 M13 2 L2 14" stroke="#e02818" stroke-width="3.6" stroke-linecap="round"/></svg>
<svg class="a" style="left:807px;top:178px" width="15" height="16" viewBox="0 0 15 16"><rect x="0.5" y="3.5" width="9" height="12" fill="#a9b0b6"/><rect x="5" y="0.5" width="9" height="12" fill="#b8bec3" stroke="#d0dde6" stroke-width="0.6"/></svg>
<div class="a" style="left:825px;top:175px;width:1px;height:20px;background:#464c52"></div>
<svg class="a" style="left:827px;top:178px" width="16" height="16" viewBox="0 0 16 16"><circle cx="8" cy="8" r="7.5" fill="#a9afb5"/><path d="M4.5 8 L7 10.5 L11.5 5.5" stroke="#d6dde2" stroke-width="1.8" fill="none"/></svg>
<svg class="a" style="left:845px;top:178px" width="16" height="16" viewBox="0 0 16 16"><circle cx="8" cy="8" r="7.5" fill="#a9afb5"/><path d="M5 5 L11 11 M11 5 L5 11" stroke="#d6dde2" stroke-width="1.8"/></svg>
<div class="a" style="left:863px;top:175px;width:1px;height:20px;background:#464c52"></div>
<svg class="a" style="left:866px;top:179px" width="16" height="14" viewBox="0 0 16 14"><defs><linearGradient id="pg" x1="0" y1="0" x2="0" y2="1"><stop offset="0" stop-color="#fafafa"/><stop offset="1" stop-color="#9a9a9a"/></linearGradient></defs><path d="M3.5 1 L9.5 0.3 L11.5 5.5 L5 6.2z" fill="#d6e6f8" stroke="#9aaabb" stroke-width="0.6"/><path d="M1 8 Q1 5.5 4 5.5 H12 Q15 5.5 15 8.5 V11 Q15 14 12 14 H4 Q1 14 1 11z" fill="url(#pg)"/><path d="M2 11 H14" stroke="#8a8a8a" stroke-width="0.6"/><circle cx="12.5" cy="8" r="0.9" fill="#30b030"/></svg>
<svg class="a" style="left:884px;top:177px" width="16" height="16" viewBox="0 0 16 16"><rect x="0.7" y="0.7" width="14.6" height="9.6" rx="0.8" fill="#f0f0f0" stroke="#6a747c" stroke-width="1.2"/><path d="M1 1 L8 6.5 L15 1" stroke="#9aa" fill="none" stroke-width="0.8"/><path d="M4 6.5 h6 v3 h-6z" fill="#25b525"/><path d="M5 4.5 L2 8 L5 11.5z" fill="#25b525"/><path d="M6 10.5 h6 v3 h-6z" fill="#25b525"/><path d="M11 8.5 L14.5 12 L11 15.5z" fill="#25b525"/></svg>
<svg class="a" style="left:902px;top:178px" width="15" height="16" viewBox="0 0 15 16"><rect x="0.5" y="1.5" width="10" height="6" fill="#f4f4f4" stroke="#777"/><path d="M0.5 1.5 L5.5 5 L10.5 1.5" stroke="#777" fill="none"/><rect x="9" y="3" width="5" height="13" rx="1" fill="#6a6a6a"/><rect x="10" y="5" width="3" height="4" fill="#cfe"/><path d="M12 4 q-4 0 -5 3 l-2-2 v5 h5 l-2-1 q1-2 4-2z" fill="#2aa02a"/></svg>
<div class="a" style="left:920px;top:175px;width:1px;height:20px;background:#464c52"></div>
<svg class="a" style="left:924px;top:178px" width="15" height="15" viewBox="0 0 15 15"><path d="M2 0 h3 v9 h2.5 l-4 5 -4 -5 h2.5z" fill="#2f86e6"/><path d="M8 1 h6 v2 h-6z M9 4 h4 v2 h-4z M10 7 h3 v2 h-3z M11 10 h2 v2 h-2z" fill="#35c030"/></svg>
<svg class="a" style="left:941px;top:178px" width="16" height="16" viewBox="0 0 16 16"><path d="M13.22 6.62 L15.32 6.89 L15.32 9.11 L13.22 9.38 L12.99 10.07 L12.67 10.71 L13.96 12.38 L12.38 13.96 L10.71 12.67 L10.07 12.99 L9.38 13.22 L9.11 15.32 L6.89 15.32 L6.62 13.22 L5.93 12.99 L5.29 12.67 L3.62 13.96 L2.04 12.38 L3.33 10.71 L3.01 10.07 L2.78 9.38 L0.68 9.11 L0.68 6.89 L2.78 6.62 L3.01 5.93 L3.33 5.29 L2.04 3.62 L3.62 2.04 L5.29 3.33 L5.93 3.01 L6.62 2.78 L6.89 0.68 L9.11 0.68 L9.38 2.78 L10.07 3.01 L10.71 3.33 L12.38 2.04 L13.96 3.62 L12.67 5.29 L12.99 5.93Z" fill="url(#ggr)" stroke="#8a8ac0" stroke-width="0.6"/><circle cx="8" cy="8" r="2" fill="#d0dde6" stroke="#9090c0" stroke-width="0.6"/></svg>
<div class="a" style="left:730px;top:196px;width:633px;height:63px;border-left:2px solid #fff;border-top:2px solid #fff;border-right:2px solid #8a9197;border-bottom:2px solid #8a9197"></div>
<div class="a bar" style="left:733px;top:196px;width:626px;height:16px;">Particulars of Taxpayer</div>
<div class="a lbl" style="right:569px;top:214px;height:20px;line-height:20px;color:#5c5c5c">Client</div>
<div class="a inp" style="left:819px;top:213px;width:528px;height:20px;text-align:left;line-height:18px;font-size:12px;letter-spacing:-0.25px">ANGLO|ANGLO ENTERPRISES (PTY) LTD</div>
<div class="a lbl" style="right:569px;top:236px;height:20px;line-height:20px;color:#5c5c5c">Id/Reg No</div>
<div class="a inp" style="left:819px;top:235px;width:115px;height:20px;text-align:left;line-height:18px;">454554555</div>
<div class="a lbl" style="right:409px;top:236px;height:20px;line-height:20px;color:#5c5c5c">DOB</div>
<div class="a inp" style="left:980px;top:235px;width:77px;height:20px;text-align:left;line-height:18px;"></div>
<div class="a lbl" style="left:1074px;top:236px;height:20px;line-height:20px;">Y/E <span style="color:#5a5a5a">February</span></div>
<div class="a lbl" style="right:135px;top:236px;height:20px;line-height:20px;color:#5c5c5c">Tax Number</div>
<div class="a inp" style="left:1254px;top:235px;width:93px;height:20px;text-align:left;line-height:18px;">9158264847</div>
<div class="a lbl" style="left:1371px;top:198px;height:14px;line-height:14px;color:#555">1st</div>
<div class="a lbl" style="left:1371px;top:217px;height:14px;line-height:14px;color:#555">MA</div>
<div class="a lbl" style="left:1371px;top:239px;height:14px;line-height:14px;color:#555">SE</div>
<div class="a lbl" style="left:746px;top:264px;height:19px;line-height:19px;">Company Type</div>
<div class="a" style="left:831px;top:263px;width:132px;height:19px;background:#c9c9c9;border:1px solid #8a8a8a;color:#111;font-size:13px;line-height:17px;padding-left:4px">Normal</div>
<svg class="a" style="left:947px;top:270px" width="9" height="6" viewBox="0 0 9 6"><path d="M0.5 0.5 L4.5 4.5 L8.5 0.5" stroke="#9a9a9a" stroke-width="1" fill="none"/></svg>
<div class="a lbl" style="left:978px;top:269px;height:19px;line-height:19px;letter-spacing:-0.15px">Use Figures</div>
<div class="a" style="left:1046px;top:263px;width:324px;height:24px;border:1px solid #a8b0b6"></div>
<div class="a" style="left:1054px;top:268.5px;width:13px;height:13px;border-radius:50%;background:#fff;border:1px solid #4a4a4a;"></div>
<div class="a lbl" style="left:1071px;top:267px;line-height:16px;color:#666">Default</div>
<div class="a" style="left:1120px;top:268.5px;width:13px;height:13px;border-radius:50%;background:#fff;border:1px solid #4a4a4a;"></div>
<div class="a lbl" style="left:1137px;top:267px;line-height:16px;color:#666">Sars Irp6</div>
<div class="a" style="left:1196px;top:268.5px;width:13px;height:13px;border-radius:50%;background:#fff;border:1px solid #4a4a4a;"></div>
<div class="a lbl" style="left:1213px;top:267px;line-height:16px;color:#666">Ledger</div>
<div class="a" style="left:1262px;top:268.5px;width:13px;height:13px;border-radius:50%;background:#eee;border:1px solid #aaa"></div>
<div class="a" style="left:1265.5px;top:272px;width:6px;height:6px;border-radius:50%;background:#a0a0a0"></div>
<div class="a lbl" style="left:1279px;top:267px;line-height:16px;color:#666">Estimate</div>
<div class="a" style="left:736px;top:288px;width:295px;height:190px;border-top:2px solid #f4f8fb;border-left:2px solid #f4f8fb;border-right:2px solid #8a9197;border-bottom:2px solid #8a9197"></div>
<div class="a bar" style="left:747px;top:291px;width:274px;height:17px;line-height:19px">SARS Information</div>
<div class="a lbl" style="right:519px;top:311px;height:20px;line-height:20px;">Year Last Assessed</div>
<div class="a inp" style="left:872px;top:310px;width:41px;height:20px;text-align:right;line-height:18px;">2015</div>
<div class="a btn" style="left:925px;top:311px;width:88px;height:19px;font-size:14px;line-height:19px;padding-left:24px;color:#4a4a58">Retrieve</div>
<svg class="a" style="left:930px;top:312px" width="22" height="19" viewBox="0 0 22 19"><rect x="1.5" y="0.5" width="10" height="15" fill="#f7f7f7"/><path d="M8 0.5 L11.5 4" stroke="#ccc" stroke-width="0.6"/><circle cx="15" cy="6" r="3.6" fill="#1e1e1e"/><circle cx="14" cy="5" r="1.2" fill="#888"/><ellipse cx="14" cy="15" rx="7" ry="3.6" fill="#2f7ab8"/><path d="M4 11 A4 4 0 0 1 11 10" stroke="#3aaa3a" stroke-width="2.2" fill="none"/><path d="M11 15 A4 4 0 0 1 4 16" stroke="#3aaa3a" stroke-width="2.2" fill="none"/></svg>
<div class="a lbl" style="right:519px;top:335px;height:20px;line-height:20px;">Assessed Income</div>
<div class="a inp" style="left:872px;top:334px;width:140px;height:20px;text-align:right;line-height:18px;">990,000.00</div>
<div class="a lbl" style="right:519px;top:358px;height:20px;line-height:20px;">Normal Income</div>
<div class="a inp" style="left:872px;top:357px;width:140px;height:20px;text-align:right;line-height:18px;">990,000.00</div>
<div class="a lbl" style="right:519px;top:381px;height:20px;line-height:20px;">Add % Increase</div>
<div class="a inp" style="left:872px;top:380px;width:140px;height:20px;text-align:right;line-height:18px;">554,400.00</div>
<div class="a lbl" style="right:519px;top:404px;height:20px;line-height:20px;">Estimated Income</div>
<div class="a inp" style="left:872px;top:403px;width:140px;height:20px;text-align:right;line-height:18px;">1,544,400.00</div>
<div class="a lbl" style="right:519px;top:429px;height:20px;line-height:20px;">Employees Tax</div>
<div class="a inp" style="left:872px;top:428px;width:140px;height:20px;text-align:right;line-height:18px;">.00</div>
<div class="a lbl" style="right:519px;top:454px;height:20px;line-height:20px;">Foreign Tax Credit</div>
<div class="a inp" style="left:872px;top:453px;width:140px;height:20px;text-align:right;line-height:18px;">.00</div>
<div class="a" style="left:736px;top:486px;width:295px;height:168px;border-top:2px solid #f4f8fb;border-left:2px solid #f4f8fb;border-right:2px solid #8a9197;border-bottom:2px solid #8a9197"></div>
<div class="a bar" style="left:747px;top:484px;width:274px;height:19px;line-height:21px">Ledger Information</div>
<div class="a lbl" style="right:519px;top:506px;height:20px;line-height:20px;">Assess Year</div>
<div class="a inp" style="left:872px;top:505px;width:38px;height:20px;text-align:center;line-height:18px;">2015</div>
<div class="a inp" style="left:939px;top:505px;width:73px;height:20px;text-align:right;line-height:18px;">09/05/2017</div>
<div class="a lbl" style="right:519px;top:529px;height:20px;line-height:20px;">Normal Income</div>
<div class="a inp" style="left:872px;top:528px;width:140px;height:20px;text-align:right;line-height:18px;">990,000.00</div>
<div class="a lbl" style="right:519px;top:552px;height:20px;line-height:20px;">Add % Increase</div>
<div class="a inp" style="left:872px;top:551px;width:140px;height:20px;text-align:right;line-height:18px;">554,400.00</div>
<div class="a lbl" style="right:519px;top:574px;height:20px;line-height:20px;">Estimated Income</div>
<div class="a inp" style="left:872px;top:573px;width:140px;height:20px;text-align:right;line-height:18px;">1,544,400.00</div>
<div class="a lbl" style="right:519px;top:599px;height:20px;line-height:20px;">Employees Tax</div>
<div class="a inp" style="left:872px;top:598px;width:140px;height:20px;text-align:right;line-height:18px;">.00</div>
<div class="a lbl" style="right:519px;top:621px;height:20px;line-height:20px;">Foreign Tax Credit</div>
<div class="a inp" style="left:872px;top:620px;width:140px;height:20px;text-align:right;line-height:18px;">.00</div>
<div class="a" style="left:735px;top:660px;width:251px;height:57px;border:1px solid #fff;box-shadow:inset 1px 1px 0 #a8b0b6, 1px 1px 0 #a8b0b6"></div>
<div class="a btn" style="left:738px;top:663px;width:80px;height:18px;line-height:17px;font-size:13px;background:#dedfe0">Invoice</div>
<svg class="a" style="left:949px;top:665px" width="17" height="15" viewBox="0 0 17 15"><defs><linearGradient id="pg3" x1="0" y1="0" x2="0" y2="1"><stop offset="0" stop-color="#fafafa"/><stop offset="1" stop-color="#9a9a9a"/></linearGradient></defs><path d="M3.5 1 L9.5 0.3 L11.5 5.5 L5 6.2z" fill="#d6e6f8" stroke="#9aaabb" stroke-width="0.6"/><path d="M1 8 Q1 5.5 4 5.5 H12 Q15 5.5 15 8.5 V11 Q15 14 12 14 H4 Q1 14 1 11z" fill="url(#pg3)"/><path d="M2 11 H14" stroke="#8a8a8a" stroke-width="0.6"/><circle cx="12.5" cy="8" r="0.9" fill="#30b030"/></svg>
<div class="a" style="left:738px;top:686px;width:84px;height:20px;border:1px solid #b0b8be"></div>
<div class="a" style="left:824px;top:686px;width:72px;height:20px;border:1px solid #b0b8be"></div>
<div class="a" style="left:898px;top:686px;width:77px;height:20px;border:1px solid #b0b8be"></div>
<div class="a btn" style="left:1040px;top:774px;width:18px;height:18px;line-height:18px;font-size:11px;color:#111;font-weight:bold;letter-spacing:0.4px;padding-left:1px">...</div>
<div class="a" style="left:1055px;top:292px;width:316px;height:388px;border-top:2px solid #f4f8fb;border-left:2px solid #f4f8fb;border-right:2px solid #8a9197;border-bottom:2px solid #8a9197"></div>
<div class="a bar" style="left:1065px;top:295px;width:147px;height:18px;line-height:20px;background:#009100;padding-left:1px">Estimated Calculation</div>
<div class="a btn" style="left:1217px;top:295px;width:37px;height:19px;background:#dcdcdc"></div>
<svg class="a" style="left:1227px;top:296px" width="16" height="17" viewBox="0 0 16 17"><g transform="rotate(25 8 8)"><rect x="3" y="1" width="10" height="15" rx="1.5" fill="#505a66"/><rect x="4.5" y="2.5" width="7" height="3" fill="#9fb0c0"/><rect x="4.5" y="7" width="7" height="7" fill="#8090a0"/><circle cx="5.5" cy="13" r="1" fill="#e04030"/></g></svg>
<div class="a inp" style="left:1259px;top:295px;width:75px;height:19px;text-align:center;line-height:18px;background:#d0dde6;border-color:#a9b1b8;color:#707070">16/07/2021</div>
<div class="a lbl" style="right:198px;top:320px;height:20px;line-height:20px;"><i>Turnover</i></div>
<div class="a inp" style="left:1194px;top:319px;width:140px;height:20px;text-align:right;line-height:18px;">1,000,000.00</div>
<div class="a lbl" style="right:198px;top:364px;height:20px;line-height:20px;">Estimated Income</div>
<div class="a inp" style="left:1194px;top:363px;width:140px;height:20px;text-align:right;line-height:18px;">2,100,000.00</div>
<div class="a btn" style="left:1337px;top:364px;width:22px;height:19px;color:#0a8a0a;font-weight:bold;font-size:11px;line-height:14px">...</div>
<div class="a lbl" style="right:198px;top:387px;height:20px;line-height:20px;color:#f07878">Tax on Income</div>
<div class="a inp" style="left:1194px;top:386px;width:140px;height:20px;text-align:right;line-height:18px;">588,000.00</div>
<div class="a lbl" style="right:198px;top:410px;height:20px;line-height:20px;">Rebate</div>
<div class="a inp" style="left:1194px;top:409px;width:140px;height:20px;text-align:right;line-height:18px;">.00</div>
<div class="a lbl" style="right:198px;top:431px;height:19px;line-height:19px;">Medical Credit</div>
<div class="a inp" style="left:1194px;top:430px;width:140px;height:19px;text-align:right;line-height:18px;"></div>
<div class="a lbl" style="right:198px;top:453px;height:20px;line-height:20px;color:#f07878">Tax for Full Year</div>
<div class="a inp" style="left:1194px;top:452px;width:140px;height:20px;text-align:right;line-height:18px;">588,000.00</div>
<div class="a lbl" style="right:198px;top:476px;height:19px;line-height:19px;">Tax for this period</div>
<div class="a inp" style="left:1194px;top:475px;width:140px;height:19px;text-align:right;line-height:18px;">294,000.00</div>
<div class="a lbl" style="right:198px;top:498px;height:19px;line-height:19px;">Employees Tax</div>
<div class="a inp" style="left:1194px;top:497px;width:140px;height:19px;text-align:right;line-height:18px;">.00</div>
<div class="a lbl" style="right:198px;top:519px;height:19px;line-height:19px;">Foreign Credits</div>
<div class="a inp" style="left:1194px;top:518px;width:140px;height:19px;text-align:right;line-height:18px;">.00</div>
<div class="a lbl" style="right:198px;top:541px;height:20px;line-height:20px;color:#f07878">Tax Liability</div>
<div class="a inp" style="left:1194px;top:540px;width:140px;height:20px;text-align:right;line-height:18px;">294,000.00</div>
<div class="a btn" style="left:1114px;top:565px;width:71px;height:19px;font-size:13px;line-height:18px;padding-left:12px;background:#dcdcdc">Interest</div>
<div class="a inp" style="left:1194px;top:562px;width:140px;height:20px;text-align:right;line-height:18px;">.00</div>
<div class="a lbl" style="right:198px;top:586px;height:19px;line-height:19px;">Penalty</div>
<div class="a inp" style="left:1194px;top:585px;width:140px;height:19px;text-align:right;line-height:18px;">.00</div>
<div class="a lbl" style="right:198px;top:608px;height:20px;line-height:20px;color:#f07878">Total Due</div>
<div class="a inp" style="left:1194px;top:607px;width:140px;height:20px;text-align:right;line-height:18px;">294,000.00</div>
<div class="a" style="left:1100px;top:630px;width:251px;height:20px;border:1px solid #a8b0b6"></div>
<div class="a" style="left:1103px;top:634px;width:12px;height:12px;background:#fff;border:1px solid #999"></div>
<div class="a lbl" style="left:1119px;top:632px;height:19px;line-height:19px;color:#555">CoVid Relief</div>
<div class="a inp" style="left:1194px;top:630px;width:140px;height:20px;text-align:right;line-height:18px;">.00</div>
<div class="a lbl" style="right:198px;top:654px;height:20px;line-height:20px;">Reduced Amount Due</div>
<div class="a inp" style="left:1194px;top:653px;width:140px;height:20px;text-align:right;line-height:18px;">294,000.00</div>
<svg class="a" style="left:1060px;top:682px" width="21" height="23" viewBox="0 0 21 23"><defs><linearGradient id="ng2" x1="0" y1="0" x2="1" y2="1"><stop offset="0" stop-color="#fff8a8"/><stop offset="1" stop-color="#f2d638"/></linearGradient></defs><path d="M2.5 4.5 h16 v16 q-1 1 -3 1 h-13z" fill="url(#ng2)" stroke="#d0a818" stroke-width="1"/><path d="M4 3 L8.5 8" stroke="#8090a0" stroke-width="1.2"/><circle cx="3.5" cy="3" r="2.8" fill="#1f5fd8"/></svg>
<div class="a btn" style="left:1085px;top:686px;width:58px;height:18px;font-size:9.5px;line-height:18px;letter-spacing:0.6px;background:#dcdcdc;color:#505060">Motivation</div>
<div class="a lbl" style="left:1152px;top:686px;height:20px;line-height:20px;">Calc Status</div>
<div class="a" style="left:1216px;top:685px;width:140px;height:20px;background:#c9c9c9;border:1px solid #707070;color:#111;font-size:12.5px;line-height:20px;padding-left:3px">CALCULATED</div>
<svg class="a" style="left:1340px;top:693px" width="9" height="6" viewBox="0 0 9 6"><path d="M0.5 0.5 L4.5 4.5 L8.5 0.5" stroke="#9a9a9a" stroke-width="1" fill="none"/></svg>
<div class="a btn" style="left:1061px;top:709px;width:89px;height:19px;font-size:13px;line-height:18px;padding-left:26px;background:#dcdcdc">Submit</div>
<div class="a" style="left:1072px;top:710px"><svg width="22" height="17" viewBox="0 0 22 17"><path d="M9 3 L19 2 L18 9 L9 10z" fill="#2a86e0" stroke="#1a5aa8" stroke-width="0.6"/><ellipse cx="7" cy="13" rx="6.5" ry="3.5" fill="#2f7ab8"/><circle cx="6" cy="5" r="3.3" fill="#f0e8e0"/><path d="M2.8 4.5 A3.3 3.3 0 0 1 9.2 4" fill="#202020"/><path d="M6 14 Q10 9 15 11" stroke="#38b038" stroke-width="2" fill="none"/></svg></div>
<div class="a btn" style="left:1156px;top:709px;width:92px;height:19px;font-size:13px;line-height:18px;padding-left:20px;background:#dcdcdc">Response</div>
<svg class="a" style="left:1164px;top:711px" width="12" height="16" viewBox="0 0 12 16"><rect x="1" y="1" width="9" height="13" fill="#e8eef4" stroke="#a0b0c0"/><path d="M3 4 h5 M3 7 h5" stroke="#8aa"/></svg>
<div class="a btn" style="left:1251px;top:709px;width:107px;height:19px;font-size:13px;line-height:18px;padding-left:26px;background:#dcdcdc">Upd Status</div>
<div class="a" style="left:1259px;top:710px"><svg width="22" height="17" viewBox="0 0 22 17"><path d="M9 3 L19 2 L18 9 L9 10z" fill="#2a86e0" stroke="#1a5aa8" stroke-width="0.6"/><ellipse cx="7" cy="13" rx="6.5" ry="3.5" fill="#2f7ab8"/><circle cx="6" cy="5" r="3.3" fill="#f0e8e0"/><path d="M2.8 4.5 A3.3 3.3 0 0 1 9.2 4" fill="#202020"/><path d="M6 14 Q10 9 15 11" stroke="#38b038" stroke-width="2" fill="none"/></svg></div>
<div class="a" style="left:1061px;top:730px;width:84px;height:22px;border:1px solid #b0b8be"></div>
<div class="a" style="left:1150px;top:730px;width:98px;height:22px;border:1px solid #b0b8be"></div>
<div class="a" style="left:1251px;top:730px;width:107px;height:22px;border:1px solid #b0b8be"></div>
<div class="a" style="left:1060px;top:748px;width:307px;height:49px;background:#d0dde6;border-top:2px solid #f4f8fb;border-left:2px solid #f4f8fb;border-right:2px solid #8a9197;border-bottom:2px solid #8a9197"></div>
<div class="a lbl" style="left:1165px;top:753px;height:16px;line-height:16px;">Total Receipts</div>
<div class="a lbl" style="left:1277px;top:753px;height:16px;line-height:16px;">Outstanding</div>
<div class="a btn" style="left:1064px;top:773px;width:86px;height:20px;font-size:13px;line-height:19px;padding-left:22px;background:#dcdcdc">SOA</div>
<svg class="a" style="left:1080px;top:774px" width="20" height="19" viewBox="0 0 20 19"><path d="M3 9 A7 7 0 0 1 16 6" stroke="#2a8ae0" stroke-width="3" fill="none"/><path d="M13 2 L18 7 L12 8z" fill="#2a8ae0"/><path d="M17 10 A7 7 0 0 1 4 13" stroke="#2a8ae0" stroke-width="3" fill="none"/><path d="M7 17 L2 12 L8 11z" fill="#2a8ae0"/></svg>
<div class="a inp" style="left:1151px;top:772px;width:99px;height:20px;text-align:left;line-height:18px;"></div>
<div class="a inp" style="left:1254px;top:772px;width:109px;height:20px;text-align:right;line-height:18px;">294,000.00</div>
</body></html>
